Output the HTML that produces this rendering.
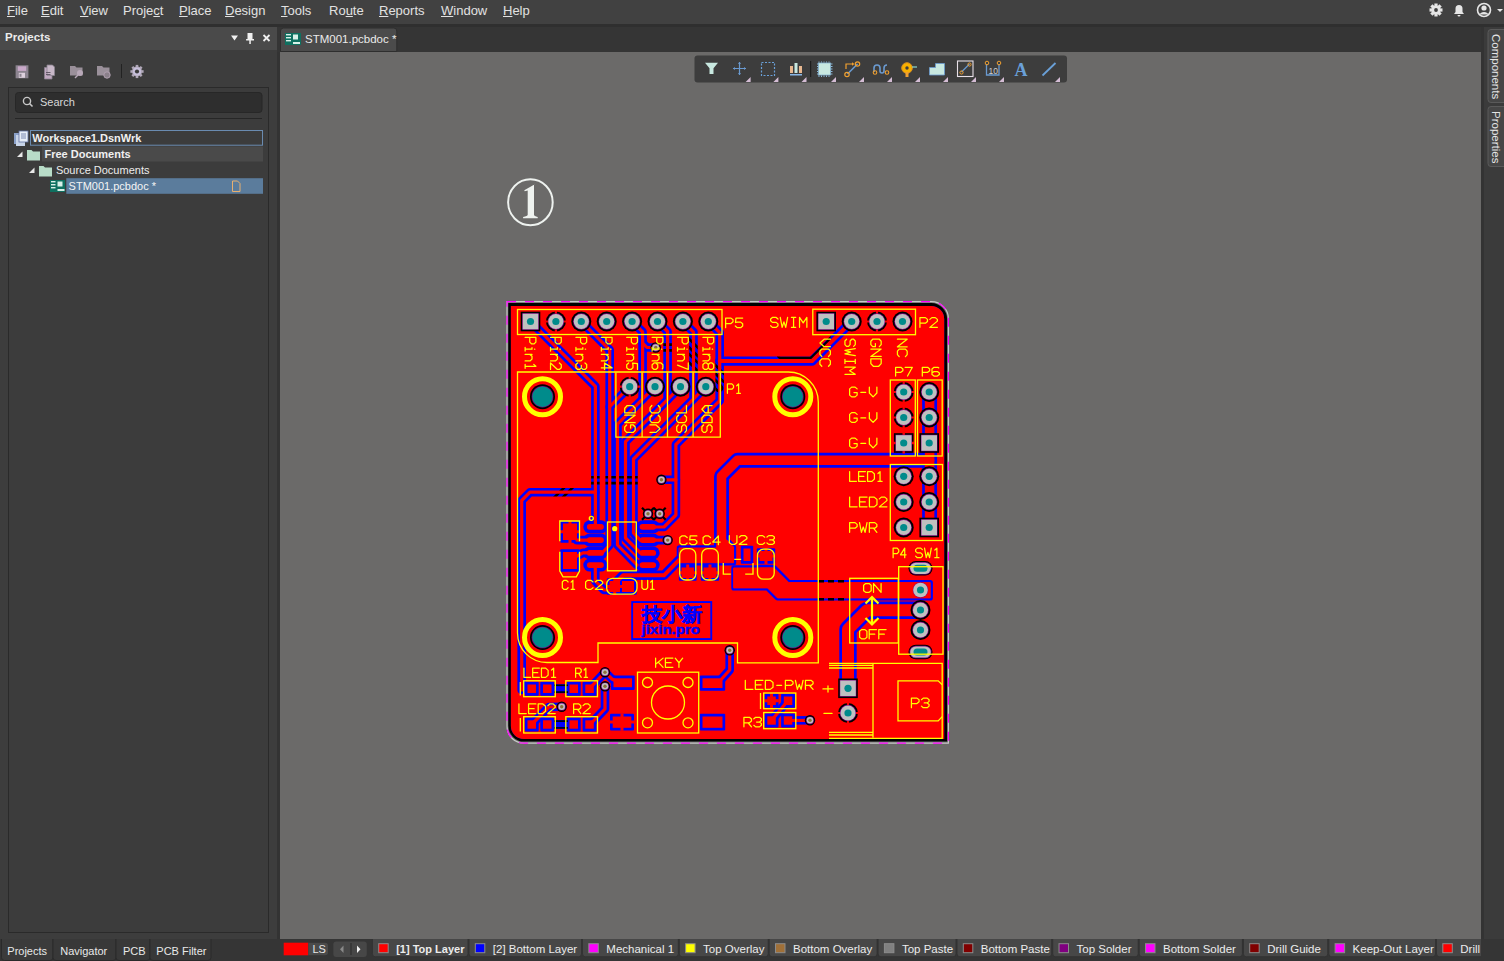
<!DOCTYPE html>
<html><head><meta charset="utf-8">
<style>
*{margin:0;padding:0;box-sizing:border-box}
html,body{width:1504px;height:961px;overflow:hidden;background:#333;font-family:"Liberation Sans",sans-serif;color:#e6e6e6}
.a{position:absolute}
#menubar{left:0;top:0;width:1504px;height:24px;background:#414141}
.mi{position:absolute;top:3px;font-size:13px;color:#e2e2e2;white-space:nowrap}
.mi u{text-decoration:underline;text-underline-offset:1px}
#strip{left:0;top:24px;width:1504px;height:3px;background:#2f2f2f}
#phead{left:0;top:27px;width:277px;height:23px;background:#4a4a4a}
#pbody{left:0;top:50px;width:277px;height:890px;background:#3d3d3d}
#tabbar{left:277px;top:27px;width:1204px;height:25px;background:#353535}
#canvas{left:280px;top:52px;width:1201px;height:887px;background:#6b6a69}
#rstrip{left:1481px;top:27px;width:23px;height:934px;background:#333}
#rpanel{left:1484px;top:27px;width:20px;height:912px;background:#3b3b3b}
#bbar{left:0;top:939px;width:1504px;height:22px;background:#353535}
.lt{position:absolute;top:0px;height:18px;background:#474747;border-radius:0 0 3px 3px;font-size:11.5px;color:#e6e6e6;white-space:nowrap;border:1px solid #3a3a3a;border-top:none}
.sw{position:absolute;top:3.5px;width:10px;height:10px;border:1px solid #8c8c8c}
.lt span{position:absolute;top:2px}
.btab{position:absolute;top:1px;height:21px;background:#3d3d3d;border:1px solid #2c2c2c;border-top:none;font-size:11.5px;color:#e6e6e6;white-space:nowrap}
.btab span{position:absolute;top:4px}
.tree{position:absolute;font-size:11px;color:#ececec;white-space:nowrap}
.tb{position:absolute}
</style></head><body>
<div id="menubar" class="a">
 <span class="mi" style="left:7px"><u>F</u>ile</span>
 <span class="mi" style="left:41px"><u>E</u>dit</span>
 <span class="mi" style="left:80px"><u>V</u>iew</span>
 <span class="mi" style="left:123px">Proje<u>c</u>t</span>
 <span class="mi" style="left:179px"><u>P</u>lace</span>
 <span class="mi" style="left:225px"><u>D</u>esign</span>
 <span class="mi" style="left:281px"><u>T</u>ools</span>
 <span class="mi" style="left:329px">Ro<u>u</u>te</span>
 <span class="mi" style="left:379px"><u>R</u>eports</span>
 <span class="mi" style="left:441px"><u>W</u>indow</span>
 <span class="mi" style="left:503px"><u>H</u>elp</span>
</div>
<div id="strip" class="a"></div>
<div id="phead" class="a"><span class="a" style="left:5px;top:4px;font-size:11.5px;font-weight:bold;color:#ececec">Projects</span></div>
<div id="pbody" class="a"></div>
<div id="tabbar" class="a"></div>
<div id="canvas" class="a"></div>
<div id="rstrip" class="a"></div>
<div id="rpanel" class="a"></div>
<div id="bbar" class="a"></div>
<svg class="a" style="left:0;top:0" width="1504" height="961" viewBox="0 0 1504 961">
<defs>
<clipPath id="cb"><path d="M510.9,305.9 H931.2 A13,13 0 0 1 944.2,318.9 V739 H523.9 A13,13 0 0 1 510.9,726 Z"/></clipPath>
<mask id="tm" maskUnits="userSpaceOnUse" x="0" y="0" width="1504" height="961">
<rect x="0" y="0" width="1504" height="961" fill="#fff"/>
<g fill="none" stroke="#000" stroke-linecap="round" stroke-linejoin="round">
<path d="M530.5,321.5 L595.4,386.4 L595.4,527.0" stroke-width="8.6"/>
<path d="M595.4,492.2 L530.0,492.2 L521.7,500.5 L521.7,690.0" stroke-width="8.6"/>
<path d="M581.3,321.5 L609.7,349.9 L609.7,545.0 L602.0,553.0" stroke-width="8.6"/>
<path d="M632.2,321.5 L642.6,331.9 L642.6,399.1" stroke-width="8.6"/>
<path d="M655.0,386.7 L617.5,424.2 L617.5,545.0 L637.0,565.0" stroke-width="8.6"/>
<path d="M657.6,321.5 L667.6,331.5 L667.6,399.6" stroke-width="8.6"/>
<path d="M680.5,386.7 L625.5,441.7 L625.5,538.0 L640.0,552.5" stroke-width="8.6"/>
<path d="M682.9,321.5 L693.5,332.1 L693.5,399.0" stroke-width="8.6"/>
<path d="M705.8,386.7 L633.5,459.0 L633.5,533.0 L640.0,540.0" stroke-width="8.6"/>
<path d="M629.7,386.7 L609.7,406.7" stroke-width="8.6"/>
<path d="M708.6,321.5 L719.7,332.6 L719.7,400.7 L675.9,444.5 L675.9,515.0 L664.0,527.0 L650.0,527.0" stroke-width="8.6"/>
<path d="M851.7,321.5 L812.0,361.1 L719.7,361.1" stroke-width="9.4"/>
<path d="M655.7,347.5 L647.0,347.5 L642.6,343.0" stroke-width="8.6"/>
<path d="M661.4,479.8 L675.9,479.8" stroke-width="8.6"/>
<path d="M650.0,540.1 L667.7,540.1" stroke-width="8.6"/>
<path d="M595.3,565.0 L595.3,581.0 L604.0,590.0 L612.0,590.0" stroke-width="8.6"/>
<path d="M577.0,540.1 L590.0,540.1" stroke-width="8.6"/>
<path d="M577.0,556.0 L583.0,552.9 L590.0,552.9" stroke-width="8.6"/>
<path d="M679.0,560.0 L664.0,575.3 L623.0,575.3 L617.0,581.3" stroke-width="9.4"/>
<path d="M929.6,392.0 L929.6,460.2 L737.5,460.2 L721.5,476.2 L721.5,548.0" stroke-width="14.9"/>
<path d="M929.6,460.2 L929.6,527.5" stroke-width="14.9"/>
<path d="M920.5,610.2 L867.0,610.2 L848.0,629.2 L848.0,688.0" stroke-width="17.4"/>
<path d="M589.5,688.7 L605.0,672.2" stroke-width="8.6"/>
<path d="M605.0,672.2 L612.0,679.0 L620.0,683.0" stroke-width="8.6"/>
<path d="M605.0,686.3 L605.0,709.0 L590.0,724.5" stroke-width="8.6"/>
<path d="M531.0,725.0 L549.0,707.0 L561.7,706.7" stroke-width="8.6"/>
<path d="M713.0,683.0 L718.0,683.0 L729.7,670.0 L729.7,650.3" stroke-width="8.6"/>
<path d="M771.5,720.5 L788.0,700.5" stroke-width="8.6"/>
<path d="M788.0,720.5 L810.0,720.3" stroke-width="8.6"/>
<path d="M679.4,548.0 L716.8,548.0 L716.8,540.0 L726.8,540.0 L733.5,547.0 L733.5,562.7 L679.4,562.7Z" fill="#000" stroke-width="5.4"/>
<path d="M734.0,568.0 L774.2,568.0 L788.8,582.6 L930.2,582.6 L930.2,597.9 L777.5,597.9 L767.5,587.9 L734.0,587.9Z" fill="#000" stroke-width="5.4"/>
</g>
<rect x="583.3" y="520.3" width="24.2" height="13.0" rx="6.5" fill="#000"/>
<rect x="636.0" y="520.3" width="23.7" height="13.0" rx="6.5" fill="#000"/>
<rect x="583.3" y="533.6" width="24.2" height="13.0" rx="6.5" fill="#000"/>
<rect x="636.0" y="533.6" width="23.7" height="13.0" rx="6.5" fill="#000"/>
<rect x="583.3" y="546.4" width="24.2" height="13.0" rx="6.5" fill="#000"/>
<rect x="636.0" y="546.4" width="23.7" height="13.0" rx="6.5" fill="#000"/>
<rect x="583.3" y="558.6" width="24.2" height="13.0" rx="6.5" fill="#000"/>
<rect x="636.0" y="558.6" width="23.7" height="13.0" rx="6.5" fill="#000"/>
<rect x="560.3" y="520.8" width="19.4" height="21.9" rx="1" fill="#000"/>
<rect x="560.3" y="549.3" width="19.4" height="22.4" rx="1" fill="#000"/>
<rect x="606.8" y="578.3" width="15.9" height="16.4" rx="1" fill="#000"/>
<rect x="619.3" y="578.3" width="17.4" height="16.4" rx="1" fill="#000"/>
<rect x="678.8" y="548.3" width="17.9" height="15.4" rx="1" fill="#000"/>
<rect x="678.8" y="564.8" width="17.9" height="15.9" rx="1" fill="#000"/>
<rect x="700.8" y="548.3" width="18.4" height="15.4" rx="1" fill="#000"/>
<rect x="700.8" y="564.8" width="18.4" height="15.9" rx="1" fill="#000"/>
<rect x="756.8" y="548.3" width="18.4" height="15.4" rx="1" fill="#000"/>
<rect x="756.8" y="564.8" width="18.4" height="15.9" rx="1" fill="#000"/>
<rect x="740.8" y="545.8" width="12.4" height="17.9" rx="1" fill="#000"/>
<rect x="524.8" y="681.8" width="13.9" height="13.9" rx="1" fill="#000"/>
<rect x="540.3" y="681.8" width="13.9" height="13.9" rx="1" fill="#000"/>
<rect x="566.8" y="681.8" width="13.9" height="13.9" rx="1" fill="#000"/>
<rect x="582.6" y="681.8" width="13.9" height="13.9" rx="1" fill="#000"/>
<rect x="524.8" y="717.6" width="13.9" height="13.8" rx="1" fill="#000"/>
<rect x="540.3" y="717.6" width="13.9" height="13.8" rx="1" fill="#000"/>
<rect x="566.8" y="717.6" width="13.9" height="13.8" rx="1" fill="#000"/>
<rect x="582.6" y="717.6" width="13.9" height="13.8" rx="1" fill="#000"/>
<rect x="610.8" y="675.6" width="23.9" height="14.3" rx="1" fill="#000"/>
<rect x="699.8" y="675.6" width="25.4" height="15.1" rx="1" fill="#000"/>
<rect x="610.0" y="713.8" width="24.0" height="16.7" rx="1" fill="#000"/>
<rect x="699.8" y="713.8" width="25.4" height="16.7" rx="1" fill="#000"/>
<rect x="764.6" y="693.8" width="13.9" height="13.9" rx="1" fill="#000"/>
<rect x="781.1" y="693.8" width="13.9" height="13.9" rx="1" fill="#000"/>
<rect x="764.6" y="713.6" width="13.9" height="13.8" rx="1" fill="#000"/>
<rect x="781.1" y="713.6" width="13.9" height="13.8" rx="1" fill="#000"/>
</mask>
</defs>
<path d="M507,301.6 H931.4 A17,17 0 0 1 948.4,318.6 V743.2 H524 A17,17 0 0 1 507,726.2 Z" fill="none" stroke="#c8c8c8" stroke-width="1.2"/>
<path d="M507,301.6 H931.4 A17,17 0 0 1 948.4,318.6 V743.2 H524 A17,17 0 0 1 507,726.2 Z" fill="none" stroke="#ff00ff" stroke-width="1.2" stroke-dasharray="9 9"/>
<path d="M508.3,303 H931.1 A16,16 0 0 1 947.1,319 V741.6 H524.3 A16,16 0 0 1 508.3,725.6 Z" fill="#000"/>
<g clip-path="url(#cb)">
<rect x="500" y="300" width="460" height="450" fill="#0000ff"/>
<g fill="none" stroke-linecap="round" stroke-linejoin="round">
<path d="M655.7,347.5 L678.0,347.5 L700.0,369.0 L719.0,388.0" stroke="#000" stroke-width="8.6"/>
<path d="M686.0,340.0 L700.0,354.0 L725.0,379.0" stroke="#000" stroke-width="8.6"/>
<path d="M591.0,480.2 L640.0,480.2" stroke="#000" stroke-width="8.6"/>
<path d="M533.0,523.0 L573.0,483.0" stroke="#000" stroke-width="8.6"/>
<path d="M826.2,325.0 L826.2,338.5 L809.7,355.0 L781.0,355.0" stroke="#000" stroke-width="8.6"/>
<path d="M655.7,347.5 L678.0,347.5 L700.0,369.0 L719.0,388.0" stroke="#0000ff" stroke-width="3.2"/>
<path d="M686.0,340.0 L700.0,354.0 L725.0,379.0" stroke="#0000ff" stroke-width="3.2"/>
<path d="M591.0,480.2 L640.0,480.2" stroke="#0000ff" stroke-width="3.2"/>
<path d="M533.0,523.0 L573.0,483.0" stroke="#0000ff" stroke-width="3.2"/>
<path d="M826.2,325.0 L826.2,338.5 L809.7,355.0 L781.0,355.0" stroke="#0000ff" stroke-width="3.2"/>
</g>
<rect x="500" y="300" width="460" height="450" fill="#ff0000" mask="url(#tm)"/>
<g fill="none" stroke="#ff0000" stroke-linecap="round" stroke-linejoin="round">
<path d="M530.5,321.5 L595.4,386.4 L595.4,527.0" stroke-width="3.2"/>
<path d="M595.4,492.2 L530.0,492.2 L521.7,500.5 L521.7,690.0" stroke-width="3.2"/>
<path d="M581.3,321.5 L609.7,349.9 L609.7,545.0 L602.0,553.0" stroke-width="3.2"/>
<path d="M632.2,321.5 L642.6,331.9 L642.6,399.1" stroke-width="3.2"/>
<path d="M655.0,386.7 L617.5,424.2 L617.5,545.0 L637.0,565.0" stroke-width="3.2"/>
<path d="M657.6,321.5 L667.6,331.5 L667.6,399.6" stroke-width="3.2"/>
<path d="M680.5,386.7 L625.5,441.7 L625.5,538.0 L640.0,552.5" stroke-width="3.2"/>
<path d="M682.9,321.5 L693.5,332.1 L693.5,399.0" stroke-width="3.2"/>
<path d="M705.8,386.7 L633.5,459.0 L633.5,533.0 L640.0,540.0" stroke-width="3.2"/>
<path d="M629.7,386.7 L609.7,406.7" stroke-width="3.2"/>
<path d="M708.6,321.5 L719.7,332.6 L719.7,400.7 L675.9,444.5 L675.9,515.0 L664.0,527.0 L650.0,527.0" stroke-width="3.2"/>
<path d="M851.7,321.5 L812.0,361.1 L719.7,361.1" stroke-width="4.0"/>
<path d="M655.7,347.5 L647.0,347.5 L642.6,343.0" stroke-width="3.2"/>
<path d="M661.4,479.8 L675.9,479.8" stroke-width="3.2"/>
<path d="M650.0,540.1 L667.7,540.1" stroke-width="3.2"/>
<path d="M595.3,565.0 L595.3,581.0 L604.0,590.0 L612.0,590.0" stroke-width="3.2"/>
<path d="M577.0,540.1 L590.0,540.1" stroke-width="3.2"/>
<path d="M577.0,556.0 L583.0,552.9 L590.0,552.9" stroke-width="3.2"/>
<path d="M679.0,560.0 L664.0,575.3 L623.0,575.3 L617.0,581.3" stroke-width="4.0"/>
<path d="M929.6,392.0 L929.6,460.2 L737.5,460.2 L721.5,476.2 L721.5,548.0" stroke-width="9.5"/>
<path d="M929.6,460.2 L929.6,527.5" stroke-width="9.5"/>
<path d="M920.5,610.2 L867.0,610.2 L848.0,629.2 L848.0,688.0" stroke-width="12.0"/>
<path d="M589.5,688.7 L605.0,672.2" stroke-width="3.2"/>
<path d="M605.0,672.2 L612.0,679.0 L620.0,683.0" stroke-width="3.2"/>
<path d="M605.0,686.3 L605.0,709.0 L590.0,724.5" stroke-width="3.2"/>
<path d="M531.0,725.0 L549.0,707.0 L561.7,706.7" stroke-width="3.2"/>
<path d="M713.0,683.0 L718.0,683.0 L729.7,670.0 L729.7,650.3" stroke-width="3.2"/>
<path d="M771.5,720.5 L788.0,700.5" stroke-width="3.2"/>
<path d="M788.0,720.5 L810.0,720.3" stroke-width="3.2"/>
<path d="M679.4,548.0 L716.8,548.0 L716.8,540.0 L726.8,540.0 L733.5,547.0 L733.5,562.7 L679.4,562.7Z" fill="#ff0000"/>
<path d="M734.0,568.0 L774.2,568.0 L788.8,582.6 L930.2,582.6 L930.2,597.9 L777.5,597.9 L767.5,587.9 L734.0,587.9Z" fill="#ff0000"/>
</g>
<rect x="586.9" y="523.9" width="17.0" height="5.8" rx="2.9" fill="#ff0000"/>
<rect x="639.6" y="523.9" width="16.5" height="5.8" rx="2.9" fill="#ff0000"/>
<rect x="586.9" y="537.2" width="17.0" height="5.8" rx="2.9" fill="#ff0000"/>
<rect x="639.6" y="537.2" width="16.5" height="5.8" rx="2.9" fill="#ff0000"/>
<rect x="586.9" y="550.0" width="17.0" height="5.8" rx="2.9" fill="#ff0000"/>
<rect x="639.6" y="550.0" width="16.5" height="5.8" rx="2.9" fill="#ff0000"/>
<rect x="586.9" y="562.2" width="17.0" height="5.8" rx="2.9" fill="#ff0000"/>
<rect x="639.6" y="562.2" width="16.5" height="5.8" rx="2.9" fill="#ff0000"/>
<rect x="563" y="523.5" width="14.0" height="16.5" rx="0" fill="#ff0000"/>
<path d="M568.5,520.5 h3 v22.5 h-3z M560.0,530.2 v3 h20.0 v-3z" fill="#ff0000"/>
<rect x="563" y="552" width="14.0" height="17.0" rx="0" fill="#ff0000"/>
<rect x="609.5" y="581" width="10.5" height="11.0" rx="0" fill="#ff0000"/>
<path d="M613.2,578.0 h3 v17.0 h-3z M606.5,585.0 v3 h16.5 v-3z" fill="#ff0000"/>
<rect x="622" y="581" width="12.0" height="11.0" rx="0" fill="#ff0000"/>
<rect x="681.5" y="551" width="12.5" height="10.0" rx="0" fill="#ff0000"/>
<rect x="681.5" y="567.5" width="12.5" height="10.5" rx="0" fill="#ff0000"/>
<path d="M686.2,564.5 h3 v16.5 h-3z M678.5,571.2 v3 h18.5 v-3z" fill="#ff0000"/>
<rect x="703.5" y="551" width="13.0" height="10.0" rx="0" fill="#ff0000"/>
<rect x="703.5" y="567.5" width="13.0" height="10.5" rx="0" fill="#ff0000"/>
<path d="M708.5,564.5 h3 v16.5 h-3z M700.5,571.2 v3 h19.0 v-3z" fill="#ff0000"/>
<rect x="759.5" y="551" width="13.0" height="10.0" rx="0" fill="#ff0000"/>
<path d="M764.5,548.0 h3 v16.0 h-3z M756.5,554.5 v3 h19.0 v-3z" fill="#ff0000"/>
<rect x="759.5" y="567.5" width="13.0" height="10.5" rx="0" fill="#ff0000"/>
<rect x="743.5" y="548.5" width="7.0" height="12.5" rx="0" fill="#ff0000"/>
<rect x="527.5" y="684.5" width="8.5" height="8.5" rx="0" fill="#ff0000"/>
<rect x="543" y="684.5" width="8.5" height="8.5" rx="0" fill="#ff0000"/>
<rect x="569.5" y="684.5" width="8.5" height="8.5" rx="0" fill="#ff0000"/>
<rect x="585.3" y="684.5" width="8.5" height="8.5" rx="0" fill="#ff0000"/>
<rect x="527.5" y="720.3" width="8.5" height="8.4" rx="0" fill="#ff0000"/>
<rect x="543" y="720.3" width="8.5" height="8.4" rx="0" fill="#ff0000"/>
<rect x="569.5" y="720.3" width="8.5" height="8.4" rx="0" fill="#ff0000"/>
<rect x="585.3" y="720.3" width="8.5" height="8.4" rx="0" fill="#ff0000"/>
<rect x="613.5" y="678.3" width="18.5" height="8.9" rx="0" fill="#ff0000"/>
<rect x="702.5" y="678.3" width="20.0" height="9.7" rx="0" fill="#ff0000"/>
<rect x="612.7" y="716.5" width="18.6" height="11.3" rx="0" fill="#ff0000"/>
<path d="M620.5,713.5 h3 v17.3 h-3z M609.7,720.6 v3 h24.6 v-3z" fill="#ff0000"/>
<rect x="702.5" y="716.5" width="20.0" height="11.3" rx="0" fill="#ff0000"/>
<rect x="767.3" y="696.5" width="8.5" height="8.5" rx="0" fill="#ff0000"/>
<path d="M770.0,693.5 h3 v14.5 h-3z M764.3,699.2 v3 h14.5 v-3z" fill="#ff0000"/>
<rect x="783.8" y="696.5" width="8.5" height="8.5" rx="0" fill="#ff0000"/>
<rect x="767.3" y="716.3" width="8.5" height="8.4" rx="0" fill="#ff0000"/>
<rect x="783.8" y="716.3" width="8.5" height="8.4" rx="0" fill="#ff0000"/>
</g>
<rect x="554" y="684.2" width="14" height="9" fill="#0000ff"/><rect x="554" y="684.5" width="14" height="1.6" fill="#000"/><rect x="554" y="691.3000000000001" width="14" height="1.6" fill="#000"/>
<rect x="554" y="720.0" width="14" height="9" fill="#0000ff"/><rect x="554" y="720.3" width="14" height="1.6" fill="#000"/><rect x="554" y="727.1" width="14" height="1.6" fill="#000"/>
<path d="M642,507.79999999999995 L654,519.8 M654,507.79999999999995 L642,519.8" stroke="#000" stroke-width="2.2"/>
<path d="M653.7,507.79999999999995 L665.7,519.8 M665.7,507.79999999999995 L653.7,519.8" stroke="#000" stroke-width="2.2"/>
<rect x="520.7" y="311.7" width="19.6" height="19.6" fill="#000"/>
<rect x="522.2" y="313.2" width="16.6" height="16.6" fill="#800080"/>
<rect x="522.7" y="313.7" width="15.6" height="15.6" fill="#c0c0c0"/>
<circle cx="530.5" cy="321.5" r="3.6" fill="#008b8b"/>
<circle cx="555.9" cy="321.5" r="10" fill="#000"/>
<path d="M554.8,310.9 h2.2 v21.2 h-2.2z M545.3,320.4 v2.2 h21.2 v-2.2z" fill="#ff0000"/>
<circle cx="555.9" cy="321.5" r="8.2" fill="#800080"/><circle cx="555.9" cy="321.5" r="7.6" fill="#c0c0c0"/>
<circle cx="555.9" cy="321.5" r="3.6" fill="#008b8b"/>
<circle cx="581.3" cy="321.5" r="10" fill="#000"/>
<circle cx="581.3" cy="321.5" r="8.2" fill="#800080"/><circle cx="581.3" cy="321.5" r="7.6" fill="#c0c0c0"/>
<circle cx="581.3" cy="321.5" r="3.6" fill="#008b8b"/>
<circle cx="606.7" cy="321.5" r="10" fill="#000"/>
<circle cx="606.7" cy="321.5" r="8.2" fill="#800080"/><circle cx="606.7" cy="321.5" r="7.6" fill="#c0c0c0"/>
<circle cx="606.7" cy="321.5" r="3.6" fill="#008b8b"/>
<circle cx="632.1" cy="321.5" r="10" fill="#000"/>
<circle cx="632.1" cy="321.5" r="8.2" fill="#800080"/><circle cx="632.1" cy="321.5" r="7.6" fill="#c0c0c0"/>
<circle cx="632.1" cy="321.5" r="3.6" fill="#008b8b"/>
<circle cx="657.5" cy="321.5" r="10" fill="#000"/>
<circle cx="657.5" cy="321.5" r="8.2" fill="#800080"/><circle cx="657.5" cy="321.5" r="7.6" fill="#c0c0c0"/>
<circle cx="657.5" cy="321.5" r="3.6" fill="#008b8b"/>
<circle cx="682.9" cy="321.5" r="10" fill="#000"/>
<circle cx="682.9" cy="321.5" r="8.2" fill="#800080"/><circle cx="682.9" cy="321.5" r="7.6" fill="#c0c0c0"/>
<circle cx="682.9" cy="321.5" r="3.6" fill="#008b8b"/>
<circle cx="708.3" cy="321.5" r="10" fill="#000"/>
<circle cx="708.3" cy="321.5" r="8.2" fill="#800080"/><circle cx="708.3" cy="321.5" r="7.6" fill="#c0c0c0"/>
<circle cx="708.3" cy="321.5" r="3.6" fill="#008b8b"/>
<rect x="816.4" y="311.7" width="19.6" height="19.6" fill="#000"/>
<rect x="817.9" y="313.2" width="16.6" height="16.6" fill="#800080"/>
<rect x="818.4" y="313.7" width="15.6" height="15.6" fill="#c0c0c0"/>
<circle cx="826.2" cy="321.5" r="3.6" fill="#008b8b"/>
<circle cx="851.7" cy="321.5" r="10" fill="#000"/>
<circle cx="851.7" cy="321.5" r="8.2" fill="#800080"/><circle cx="851.7" cy="321.5" r="7.6" fill="#c0c0c0"/>
<circle cx="851.7" cy="321.5" r="3.6" fill="#008b8b"/>
<circle cx="877.0" cy="321.5" r="10" fill="#000"/>
<path d="M875.9,310.9 h2.2 v21.2 h-2.2z M866.4,320.4 v2.2 h21.2 v-2.2z" fill="#ff0000"/>
<circle cx="877.0" cy="321.5" r="8.2" fill="#800080"/><circle cx="877.0" cy="321.5" r="7.6" fill="#c0c0c0"/>
<circle cx="877.0" cy="321.5" r="3.6" fill="#008b8b"/>
<circle cx="902.5" cy="321.5" r="10" fill="#000"/>
<circle cx="902.5" cy="321.5" r="8.2" fill="#800080"/><circle cx="902.5" cy="321.5" r="7.6" fill="#c0c0c0"/>
<circle cx="902.5" cy="321.5" r="3.6" fill="#008b8b"/>
<circle cx="629.7" cy="386.7" r="10" fill="#000"/>
<path d="M628.6,376.1 h2.2 v21.2 h-2.2z M619.1,385.6 v2.2 h21.2 v-2.2z" fill="#ff0000"/>
<circle cx="629.7" cy="386.7" r="8.2" fill="#800080"/><circle cx="629.7" cy="386.7" r="7.6" fill="#c0c0c0"/>
<circle cx="629.7" cy="386.7" r="3.6" fill="#008b8b"/>
<circle cx="655.0" cy="386.7" r="10" fill="#000"/>
<circle cx="655.0" cy="386.7" r="8.2" fill="#800080"/><circle cx="655.0" cy="386.7" r="7.6" fill="#c0c0c0"/>
<circle cx="655.0" cy="386.7" r="3.6" fill="#008b8b"/>
<circle cx="680.5" cy="386.7" r="10" fill="#000"/>
<circle cx="680.5" cy="386.7" r="8.2" fill="#800080"/><circle cx="680.5" cy="386.7" r="7.6" fill="#c0c0c0"/>
<circle cx="680.5" cy="386.7" r="3.6" fill="#008b8b"/>
<circle cx="705.8" cy="386.7" r="10" fill="#000"/>
<circle cx="705.8" cy="386.7" r="8.2" fill="#800080"/><circle cx="705.8" cy="386.7" r="7.6" fill="#c0c0c0"/>
<circle cx="705.8" cy="386.7" r="3.6" fill="#008b8b"/>
<circle cx="903.7" cy="392" r="10" fill="#000"/>
<path d="M902.6,381.4 h2.2 v21.2 h-2.2z M893.1,390.9 v2.2 h21.2 v-2.2z" fill="#ff0000"/>
<circle cx="903.7" cy="392" r="8.2" fill="#800080"/><circle cx="903.7" cy="392" r="7.6" fill="#c0c0c0"/>
<circle cx="903.7" cy="392" r="3.6" fill="#008b8b"/>
<circle cx="929.2" cy="392" r="10" fill="#000"/>
<circle cx="929.2" cy="392" r="8.2" fill="#800080"/><circle cx="929.2" cy="392" r="7.6" fill="#c0c0c0"/>
<circle cx="929.2" cy="392" r="3.6" fill="#008b8b"/>
<circle cx="903.7" cy="417.5" r="10" fill="#000"/>
<path d="M902.6,406.9 h2.2 v21.2 h-2.2z M893.1,416.4 v2.2 h21.2 v-2.2z" fill="#ff0000"/>
<circle cx="903.7" cy="417.5" r="8.2" fill="#800080"/><circle cx="903.7" cy="417.5" r="7.6" fill="#c0c0c0"/>
<circle cx="903.7" cy="417.5" r="3.6" fill="#008b8b"/>
<circle cx="929.2" cy="417.5" r="10" fill="#000"/>
<circle cx="929.2" cy="417.5" r="8.2" fill="#800080"/><circle cx="929.2" cy="417.5" r="7.6" fill="#c0c0c0"/>
<circle cx="929.2" cy="417.5" r="3.6" fill="#008b8b"/>
<rect x="893.9" y="433.2" width="19.6" height="19.6" fill="#000"/>
<path d="M902.5,432.5 h2.4 v21 h-2.4z M893.2,441.8 v2.4 h21 v-2.4z" fill="#ff0000"/>
<rect x="895.4" y="434.7" width="16.6" height="16.6" fill="#800080"/>
<rect x="895.9" y="435.2" width="15.6" height="15.6" fill="#c0c0c0"/>
<circle cx="903.7" cy="443" r="3.6" fill="#008b8b"/>
<rect x="919.4" y="433.2" width="19.6" height="19.6" fill="#000"/>
<rect x="920.9" y="434.7" width="16.6" height="16.6" fill="#800080"/>
<rect x="921.4" y="435.2" width="15.6" height="15.6" fill="#c0c0c0"/>
<circle cx="929.2" cy="443" r="3.6" fill="#008b8b"/>
<circle cx="903.7" cy="476.3" r="10" fill="#000"/>
<circle cx="903.7" cy="476.3" r="8.2" fill="#800080"/><circle cx="903.7" cy="476.3" r="7.6" fill="#c0c0c0"/>
<circle cx="903.7" cy="476.3" r="3.6" fill="#008b8b"/>
<circle cx="929.2" cy="476.3" r="10" fill="#000"/>
<circle cx="929.2" cy="476.3" r="8.2" fill="#800080"/><circle cx="929.2" cy="476.3" r="7.6" fill="#c0c0c0"/>
<circle cx="929.2" cy="476.3" r="3.6" fill="#008b8b"/>
<circle cx="903.7" cy="502" r="10" fill="#000"/>
<circle cx="903.7" cy="502" r="8.2" fill="#800080"/><circle cx="903.7" cy="502" r="7.6" fill="#c0c0c0"/>
<circle cx="903.7" cy="502" r="3.6" fill="#008b8b"/>
<circle cx="929.2" cy="502" r="10" fill="#000"/>
<circle cx="929.2" cy="502" r="8.2" fill="#800080"/><circle cx="929.2" cy="502" r="7.6" fill="#c0c0c0"/>
<circle cx="929.2" cy="502" r="3.6" fill="#008b8b"/>
<circle cx="903.7" cy="527.5" r="10" fill="#000"/>
<circle cx="903.7" cy="527.5" r="8.2" fill="#800080"/><circle cx="903.7" cy="527.5" r="7.6" fill="#c0c0c0"/>
<circle cx="903.7" cy="527.5" r="3.6" fill="#008b8b"/>
<rect x="919.4" y="517.7" width="19.6" height="19.6" fill="#000"/>
<rect x="920.9" y="519.2" width="16.6" height="16.6" fill="#800080"/>
<rect x="921.4" y="519.7" width="15.6" height="15.6" fill="#c0c0c0"/>
<circle cx="929.2" cy="527.5" r="3.6" fill="#008b8b"/>
<circle cx="920.5" cy="610" r="10" fill="#000"/>
<circle cx="920.5" cy="610" r="8.2" fill="#800080"/><circle cx="920.5" cy="610" r="7.6" fill="#c0c0c0"/>
<circle cx="920.5" cy="610" r="3.6" fill="#008b8b"/>
<circle cx="920.5" cy="630" r="10" fill="#000"/>
<circle cx="920.5" cy="630" r="8.2" fill="#800080"/><circle cx="920.5" cy="630" r="7.6" fill="#c0c0c0"/>
<circle cx="920.5" cy="630" r="3.6" fill="#008b8b"/>
<rect x="838.2" y="678.5" width="19.6" height="19.6" fill="#000"/>
<rect x="839.7" y="680.0" width="16.6" height="16.6" fill="#800080"/>
<rect x="840.2" y="680.5" width="15.6" height="15.6" fill="#c0c0c0"/>
<circle cx="848" cy="688.3" r="3.6" fill="#008b8b"/>
<circle cx="848" cy="713" r="10" fill="#000"/>
<path d="M846.9,702.4 h2.2 v21.2 h-2.2z M837.4,711.9 v2.2 h21.2 v-2.2z" fill="#ff0000"/>
<circle cx="848" cy="713" r="8.2" fill="#800080"/><circle cx="848" cy="713" r="7.6" fill="#c0c0c0"/>
<circle cx="848" cy="713" r="3.6" fill="#008b8b"/>
<circle cx="920.5" cy="590" r="7.8" fill="#800080"/><circle cx="920.5" cy="590" r="7.3" fill="#c0c0c0"/><circle cx="920.5" cy="590" r="3.6" fill="#008b8b"/>
<path d="M818,581.2 H848 M818,599.2 H848" stroke="#000" stroke-width="2.4" stroke-dasharray="6 4"/>
<rect x="908.5" y="561.0" width="24" height="14.6" rx="7.3" fill="#000"/>
<rect x="909.5" y="562.0" width="22" height="12.6" rx="6.3" fill="#800080"/>
<rect x="910.2" y="562.6999999999999" width="20.6" height="11.2" rx="5.6" fill="#c0c0c0"/>
<rect x="913.5" y="564.8" width="14" height="7" rx="3.5" fill="#008b8b"/>
<rect x="908.5" y="644.7" width="24" height="14.6" rx="7.3" fill="#000"/>
<rect x="909.5" y="645.7" width="22" height="12.6" rx="6.3" fill="#800080"/>
<rect x="910.2" y="646.4" width="20.6" height="11.2" rx="5.6" fill="#c0c0c0"/>
<rect x="913.5" y="648.5" width="14" height="7" rx="3.5" fill="#008b8b"/>
<circle cx="655.7" cy="347.5" r="5.2" fill="#000"/><circle cx="655.7" cy="347.5" r="3.9" fill="#800080"/><circle cx="655.7" cy="347.5" r="3.3" fill="#c0c0c0"/><circle cx="655.7" cy="347.5" r="1.7" fill="#8b6f3a"/>
<circle cx="661.4" cy="479.8" r="5.2" fill="#000"/><circle cx="661.4" cy="479.8" r="3.9" fill="#800080"/><circle cx="661.4" cy="479.8" r="3.3" fill="#c0c0c0"/><circle cx="661.4" cy="479.8" r="1.7" fill="#8b6f3a"/>
<circle cx="648" cy="513.8" r="5.2" fill="#000"/><circle cx="648" cy="513.8" r="3.9" fill="#800080"/><circle cx="648" cy="513.8" r="3.3" fill="#c0c0c0"/><circle cx="648" cy="513.8" r="1.7" fill="#8b6f3a"/>
<circle cx="659.7" cy="513.8" r="5.2" fill="#000"/><circle cx="659.7" cy="513.8" r="3.9" fill="#800080"/><circle cx="659.7" cy="513.8" r="3.3" fill="#c0c0c0"/><circle cx="659.7" cy="513.8" r="1.7" fill="#8b6f3a"/>
<circle cx="667.7" cy="540.1" r="5.2" fill="#000"/><circle cx="667.7" cy="540.1" r="3.9" fill="#800080"/><circle cx="667.7" cy="540.1" r="3.3" fill="#c0c0c0"/><circle cx="667.7" cy="540.1" r="1.7" fill="#8b6f3a"/>
<circle cx="605" cy="672.2" r="5.2" fill="#000"/><circle cx="605" cy="672.2" r="3.9" fill="#800080"/><circle cx="605" cy="672.2" r="3.3" fill="#c0c0c0"/><circle cx="605" cy="672.2" r="1.7" fill="#8b6f3a"/>
<circle cx="605" cy="686.3" r="5.2" fill="#000"/><circle cx="605" cy="686.3" r="3.9" fill="#800080"/><circle cx="605" cy="686.3" r="3.3" fill="#c0c0c0"/><circle cx="605" cy="686.3" r="1.7" fill="#8b6f3a"/>
<circle cx="561.7" cy="706.7" r="5.2" fill="#000"/><circle cx="561.7" cy="706.7" r="3.9" fill="#800080"/><circle cx="561.7" cy="706.7" r="3.3" fill="#c0c0c0"/><circle cx="561.7" cy="706.7" r="1.7" fill="#8b6f3a"/>
<circle cx="729.7" cy="650.3" r="5.2" fill="#000"/><circle cx="729.7" cy="650.3" r="3.9" fill="#800080"/><circle cx="729.7" cy="650.3" r="3.3" fill="#c0c0c0"/><circle cx="729.7" cy="650.3" r="1.7" fill="#8b6f3a"/>
<circle cx="810" cy="720.3" r="5.2" fill="#000"/><circle cx="810" cy="720.3" r="3.9" fill="#800080"/><circle cx="810" cy="720.3" r="3.3" fill="#c0c0c0"/><circle cx="810" cy="720.3" r="1.7" fill="#8b6f3a"/>
<circle cx="542.5" cy="396.7" r="18" fill="none" stroke="#ffff00" stroke-width="5"/>
<circle cx="542.5" cy="396.7" r="12.5" fill="#000"/><circle cx="542.5" cy="396.7" r="10.8" fill="#800080"/><circle cx="542.5" cy="396.7" r="10.2" fill="#008b8b"/>
<circle cx="792.8" cy="396.7" r="18" fill="none" stroke="#ffff00" stroke-width="5"/>
<circle cx="792.8" cy="396.7" r="12.5" fill="#000"/><circle cx="792.8" cy="396.7" r="10.8" fill="#800080"/><circle cx="792.8" cy="396.7" r="10.2" fill="#008b8b"/>
<circle cx="542.5" cy="637.5" r="18" fill="none" stroke="#ffff00" stroke-width="5"/>
<circle cx="542.5" cy="637.5" r="12.5" fill="#000"/><circle cx="542.5" cy="637.5" r="10.8" fill="#800080"/><circle cx="542.5" cy="637.5" r="10.2" fill="#008b8b"/>
<circle cx="792.8" cy="637.5" r="18" fill="none" stroke="#ffff00" stroke-width="5"/>
<circle cx="792.8" cy="637.5" r="12.5" fill="#000"/><circle cx="792.8" cy="637.5" r="10.8" fill="#800080"/><circle cx="792.8" cy="637.5" r="10.2" fill="#008b8b"/>
<g fill="none" stroke="#ffff00" stroke-width="1.3">
<rect x="517.5" y="309.5" width="204.5" height="25.0" rx="0"/>
<rect x="812.8" y="309.2" width="102.7" height="25.5" rx="0"/>
<path d="M642.1,372.5 L642.1,437.1"/>
<path d="M667.5,372.5 L667.5,437.1"/>
<path d="M693.1,372.5 L693.1,437.1"/>
<path d="M615.9,372.5 V437.1 H720.3 V372.5"/>
<path d="M517.5,372 H788 A30,30 0 0 1 818.3,402 V662.8 H737.5 V643 H598 V662.5 H547 A29.5,29.5 0 0 1 517.5,633 Z"/>
<rect x="890.3" y="380" width="25.0" height="76.0" rx="0"/>
<rect x="917.5" y="380" width="24.7" height="76.0" rx="0"/>
<rect x="890.3" y="464.5" width="52.2" height="76.0" rx="0"/>
<rect x="898.7" y="566.7" width="44.3" height="87.5" rx="0"/>
<rect x="849.7" y="578.3" width="48.6" height="64.7" rx="0"/>
<path d="M829,663.4 H942.2 V738.3 H829 M873,662.8 V737.5 M829,665.4 H873 M829,668 H873 M829,732.3 H873 M829,735 H873"/>
<path d="M942.2,684.8 L938.2,680.8 H898 V720.9 H938.2 L942.2,716.6"/>
<rect x="637.5" y="672.2" width="61.2" height="60.8" rx="0"/>
<circle cx="668" cy="702.5" r="16.5"/><circle cx="647.5" cy="682.5" r="5"/><circle cx="688" cy="682.5" r="5"/><circle cx="647.5" cy="722.8" r="5"/><circle cx="688" cy="722.8" r="5"/>
<rect x="523.7" y="680.8" width="31.6" height="15.9" rx="0"/>
<rect x="565.8" y="680.8" width="31.7" height="15.9" rx="0"/>
<rect x="523.7" y="716.7" width="31.6" height="16.3" rx="0"/>
<rect x="565.8" y="716.7" width="31.7" height="16.3" rx="0"/>
<rect x="763.7" y="693" width="32.1" height="15.7" rx="0"/>
<rect x="763.7" y="712.5" width="32.1" height="16.2" rx="0"/>
<path d="M520.3,682.0 L520.3,695.6"/>
<path d="M520.3,718.0 L520.3,731.6"/>
<path d="M760.5,693.0 L760.5,709.0"/>
<path d="M559.8,541.2 V521 H579.5 V541.2 M559.8,551.8 V571 L563,576.8 H576.3 L579.5,571 V551.8"/>
<rect x="606.7" y="578.3" width="30.3" height="15.9" rx="6"/>
<rect x="607.5" y="522" width="28.8" height="48.8" rx="0"/>
<rect x="679.7" y="548.7" width="16.1" height="31.3" rx="6"/>
<rect x="701.7" y="548.7" width="16.6" height="31.3" rx="6"/>
<rect x="757.5" y="549.2" width="16.7" height="30.0" rx="6"/>
<path d="M723.3,563 V574.2 H730.8 M753,563 V574.2 H745.2 M734.3,559.4 H741.2"/>
</g>
<circle cx="614.7" cy="528.7" r="2.6" fill="#ffff00"/><circle cx="591.3" cy="518.3" r="2" fill="none" stroke="#ffff00" stroke-width="1.3"/>
<path d="M872,597 V624.5 M865.5,603.5 L872,597 L878.5,603.5 M865.5,618 L872,624.5 L878.5,618" fill="none" stroke="#ffff00" stroke-width="2.2"/>
<g fill="none" stroke="#ffff00" stroke-linecap="round" stroke-linejoin="round">
<g transform="translate(725.00,317.50)" stroke-width="1.25"><path transform="translate(0.62,0.62) scale(1.1183,0.9550)" d="M0,10 V0 H4.8 L6.6,1.8 V3.9 L4.8,5.7 H0" vector-effect="non-scaling-stroke"/><path transform="translate(10.29,0.62) scale(1.1183,0.9550)" d="M6.6,0 H0.6 L0.2,4.6 L1.8,4.2 H4.8 L6.6,6 V8.2 L4.8,10 H1.8 L0,8.2" vector-effect="non-scaling-stroke"/></g>
<g transform="translate(770.00,316.80)" stroke-width="1.25"><path transform="translate(0.62,0.62) scale(1.1141,0.9950)" d="M6.6,1.6 L5,0 H1.6 L0,1.6 V3.4 L1.6,5 H5 L6.6,6.6 V8.4 L5,10 H1.6 L0,8.4" vector-effect="non-scaling-stroke"/><path transform="translate(10.26,0.62) scale(1.1141,0.9950)" d="M0,0 L1.7,10 L3.3,4.5 L4.9,10 L6.6,0" vector-effect="non-scaling-stroke"/><path transform="translate(19.89,0.62) scale(1.1141,0.9950)" d="M1.4,0 H5.2 M3.3,0 V10 M1.4,10 H5.2" vector-effect="non-scaling-stroke"/><path transform="translate(29.52,0.62) scale(1.1141,0.9950)" d="M0,10 V0 L3.3,5.5 L6.6,0 V10" vector-effect="non-scaling-stroke"/></g>
<g transform="translate(919.30,317.00)" stroke-width="1.25"><path transform="translate(0.62,0.62) scale(1.1446,0.9750)" d="M0,10 V0 H4.8 L6.6,1.8 V3.9 L4.8,5.7 H0" vector-effect="non-scaling-stroke"/><path transform="translate(10.52,0.62) scale(1.1446,0.9750)" d="M0,1.8 L1.8,0 H4.8 L6.6,1.8 V3.6 L0,10 H6.6" vector-effect="non-scaling-stroke"/></g>
<g transform="translate(726.80,383.30)" stroke-width="1.25"><path transform="translate(0.62,0.62) scale(0.9281,0.9350)" d="M0,10 V0 H4.8 L6.6,1.8 V3.9 L4.8,5.7 H0" vector-effect="non-scaling-stroke"/><path transform="translate(8.65,0.62) scale(0.9281,0.9350)" d="M1.4,2 L3.4,0 V10 M1.4,10 H5.4" vector-effect="non-scaling-stroke"/></g>
<g transform="translate(895.00,366.70)" stroke-width="1.25"><path transform="translate(0.62,0.62) scale(1.0986,0.8750)" d="M0,10 V0 H4.8 L6.6,1.8 V3.9 L4.8,5.7 H0" vector-effect="non-scaling-stroke"/><path transform="translate(10.12,0.62) scale(1.0986,0.8750)" d="M0,0 H6.6 L2.2,10" vector-effect="non-scaling-stroke"/></g>
<g transform="translate(921.70,366.70)" stroke-width="1.25"><path transform="translate(0.62,0.62) scale(1.1183,0.8750)" d="M0,10 V0 H4.8 L6.6,1.8 V3.9 L4.8,5.7 H0" vector-effect="non-scaling-stroke"/><path transform="translate(10.29,0.62) scale(1.1183,0.8750)" d="M6,0.6 L5.2,0 H1.8 L0,1.8 V8.2 L1.8,10 H4.8 L6.6,8.2 V6.6 L4.8,4.8 H1.8 L0,6.6" vector-effect="non-scaling-stroke"/></g>
<g transform="translate(849.00,386.50)" stroke-width="1.25"><path transform="translate(0.62,0.62) scale(1.1405,0.9750)" d="M6.6,1.8 L4.8,0 H1.8 L0,1.8 V8.2 L1.8,10 H4.8 L6.6,8.2 V5.6 H3.8" vector-effect="non-scaling-stroke"/><path transform="translate(10.49,0.62) scale(1.1405,0.9750)" d="M1.2,5.5 H5.4" vector-effect="non-scaling-stroke"/><path transform="translate(20.35,0.62) scale(1.1405,0.9750)" d="M0,0 V6 L3.3,10 L6.6,6 V0" vector-effect="non-scaling-stroke"/></g>
<g transform="translate(849.00,412.00)" stroke-width="1.25"><path transform="translate(0.62,0.62) scale(1.1405,0.9750)" d="M6.6,1.8 L4.8,0 H1.8 L0,1.8 V8.2 L1.8,10 H4.8 L6.6,8.2 V5.6 H3.8" vector-effect="non-scaling-stroke"/><path transform="translate(10.49,0.62) scale(1.1405,0.9750)" d="M1.2,5.5 H5.4" vector-effect="non-scaling-stroke"/><path transform="translate(20.35,0.62) scale(1.1405,0.9750)" d="M0,0 V6 L3.3,10 L6.6,6 V0" vector-effect="non-scaling-stroke"/></g>
<g transform="translate(849.00,437.50)" stroke-width="1.25"><path transform="translate(0.62,0.62) scale(1.1405,0.9750)" d="M6.6,1.8 L4.8,0 H1.8 L0,1.8 V8.2 L1.8,10 H4.8 L6.6,8.2 V5.6 H3.8" vector-effect="non-scaling-stroke"/><path transform="translate(10.49,0.62) scale(1.1405,0.9750)" d="M1.2,5.5 H5.4" vector-effect="non-scaling-stroke"/><path transform="translate(20.35,0.62) scale(1.1405,0.9750)" d="M0,0 V6 L3.3,10 L6.6,6 V0" vector-effect="non-scaling-stroke"/></g>
<g transform="translate(849.00,471.00)" stroke-width="1.25"><path transform="translate(0.62,0.62) scale(1.0372,0.9750)" d="M0,0 V10 H6.6" vector-effect="non-scaling-stroke"/><path transform="translate(9.59,0.62) scale(1.0372,0.9750)" d="M6.6,0 H0 V10 H6.6 M0,5 H5" vector-effect="non-scaling-stroke"/><path transform="translate(18.56,0.62) scale(1.0372,0.9750)" d="M0,0 V10 H4.2 L6.6,7.6 V2.4 L4.2,0 Z" vector-effect="non-scaling-stroke"/><path transform="translate(27.53,0.62) scale(1.0372,0.9750)" d="M1.4,2 L3.4,0 V10 M1.4,10 H5.4" vector-effect="non-scaling-stroke"/></g>
<g transform="translate(849.00,496.50)" stroke-width="1.25"><path transform="translate(0.62,0.62) scale(1.1448,0.9750)" d="M0,0 V10 H6.6" vector-effect="non-scaling-stroke"/><path transform="translate(10.52,0.62) scale(1.1448,0.9750)" d="M6.6,0 H0 V10 H6.6 M0,5 H5" vector-effect="non-scaling-stroke"/><path transform="translate(20.42,0.62) scale(1.1448,0.9750)" d="M0,0 V10 H4.2 L6.6,7.6 V2.4 L4.2,0 Z" vector-effect="non-scaling-stroke"/><path transform="translate(30.32,0.62) scale(1.1448,0.9750)" d="M0,1.8 L1.8,0 H4.8 L6.6,1.8 V3.6 L0,10 H6.6" vector-effect="non-scaling-stroke"/></g>
<g transform="translate(849.00,522.00)" stroke-width="1.25"><path transform="translate(0.62,0.62) scale(1.1405,0.9750)" d="M0,10 V0 H4.8 L6.6,1.8 V3.9 L4.8,5.7 H0" vector-effect="non-scaling-stroke"/><path transform="translate(10.49,0.62) scale(1.1405,0.9750)" d="M0,0 L1.7,10 L3.3,4.5 L4.9,10 L6.6,0" vector-effect="non-scaling-stroke"/><path transform="translate(20.35,0.62) scale(1.1405,0.9750)" d="M0,10 V0 H4.8 L6.6,1.8 V3.9 L4.8,5.7 H0 M3.6,5.7 L6.6,10" vector-effect="non-scaling-stroke"/></g>
<g transform="translate(892.50,547.50)" stroke-width="1.25"><path transform="translate(0.62,0.62) scale(0.8494,0.9550)" d="M0,10 V0 H4.8 L6.6,1.8 V3.9 L4.8,5.7 H0" vector-effect="non-scaling-stroke"/><path transform="translate(7.97,0.62) scale(0.8494,0.9550)" d="M5,10 V0 L0,7 H6.6" vector-effect="non-scaling-stroke"/></g>
<g transform="translate(915.00,547.50)" stroke-width="1.25"><path transform="translate(0.62,0.62) scale(1.0275,0.9550)" d="M6.6,1.6 L5,0 H1.6 L0,1.6 V3.4 L1.6,5 H5 L6.6,6.6 V8.4 L5,10 H1.6 L0,8.4" vector-effect="non-scaling-stroke"/><path transform="translate(9.51,0.62) scale(1.0275,0.9550)" d="M0,0 L1.7,10 L3.3,4.5 L4.9,10 L6.6,0" vector-effect="non-scaling-stroke"/><path transform="translate(18.39,0.62) scale(1.0275,0.9550)" d="M1.4,2 L3.4,0 V10 M1.4,10 H5.4" vector-effect="non-scaling-stroke"/></g>
<g transform="translate(863.00,583.00)" stroke-width="1.25"><path transform="translate(0.62,0.62) scale(1.1446,0.8750)" d="M1.8,0 H4.8 L6.6,1.8 V8.2 L4.8,10 H1.8 L0,8.2 V1.8 Z" vector-effect="non-scaling-stroke"/><path transform="translate(10.52,0.62) scale(1.1446,0.8750)" d="M0,10 V0 L6.6,10 V0" vector-effect="non-scaling-stroke"/></g>
<g transform="translate(859.00,629.00)" stroke-width="1.25"><path transform="translate(0.62,0.62) scale(1.1071,0.9250)" d="M1.8,0 H4.8 L6.6,1.8 V8.2 L4.8,10 H1.8 L0,8.2 V1.8 Z" vector-effect="non-scaling-stroke"/><path transform="translate(10.20,0.62) scale(1.1071,0.9250)" d="M6.6,0 H0 V10 M0,5 H5" vector-effect="non-scaling-stroke"/><path transform="translate(19.77,0.62) scale(1.1071,0.9250)" d="M6.6,0 H0 V10 M0,5 H5" vector-effect="non-scaling-stroke"/></g>
<g transform="translate(910.80,697.50)" stroke-width="1.25"><path transform="translate(0.62,0.62) scale(1.1577,0.9550)" d="M0,10 V0 H4.8 L6.6,1.8 V3.9 L4.8,5.7 H0" vector-effect="non-scaling-stroke"/><path transform="translate(10.63,0.62) scale(1.1577,0.9550)" d="M0,1.6 L1.6,0 H5 L6.6,1.6 V3.4 L5,5 H2.4 M5,5 L6.6,6.6 V8.4 L5,10 H1.6 L0,8.4" vector-effect="non-scaling-stroke"/></g>
<g transform="translate(822.00,683.00)" stroke-width="1.25"><path transform="translate(0.62,0.62) scale(1.6288,0.9750)" d="M3.3,2.4 V8.6 M0.2,5.5 H6.4" vector-effect="non-scaling-stroke"/></g>
<g transform="translate(821.00,708.00)" stroke-width="1.25"><path transform="translate(0.62,0.62) scale(1.9318,0.8750)" d="M1.2,5.5 H5.4" vector-effect="non-scaling-stroke"/></g>
<g transform="translate(744.70,679.70)" stroke-width="1.25"><path transform="translate(0.62,0.62) scale(1.1586,0.9050)" d="M0,0 V10 H6.6" vector-effect="non-scaling-stroke"/><path transform="translate(10.64,0.62) scale(1.1586,0.9050)" d="M6.6,0 H0 V10 H6.6 M0,5 H5" vector-effect="non-scaling-stroke"/><path transform="translate(20.66,0.62) scale(1.1586,0.9050)" d="M0,0 V10 H4.2 L6.6,7.6 V2.4 L4.2,0 Z" vector-effect="non-scaling-stroke"/><path transform="translate(30.68,0.62) scale(1.1586,0.9050)" d="M1.2,5.5 H5.4" vector-effect="non-scaling-stroke"/><path transform="translate(40.69,0.62) scale(1.1586,0.9050)" d="M0,10 V0 H4.8 L6.6,1.8 V3.9 L4.8,5.7 H0" vector-effect="non-scaling-stroke"/><path transform="translate(50.71,0.62) scale(1.1586,0.9050)" d="M0,0 L1.7,10 L3.3,4.5 L4.9,10 L6.6,0" vector-effect="non-scaling-stroke"/><path transform="translate(60.73,0.62) scale(1.1586,0.9050)" d="M0,10 V0 H4.8 L6.6,1.8 V3.9 L4.8,5.7 H0 M3.6,5.7 L6.6,10" vector-effect="non-scaling-stroke"/></g>
<g transform="translate(743.30,716.70)" stroke-width="1.25"><path transform="translate(0.62,0.62) scale(1.1446,0.9550)" d="M0,10 V0 H4.8 L6.6,1.8 V3.9 L4.8,5.7 H0 M3.6,5.7 L6.6,10" vector-effect="non-scaling-stroke"/><path transform="translate(10.52,0.62) scale(1.1446,0.9550)" d="M0,1.6 L1.6,0 H5 L6.6,1.6 V3.4 L5,5 H2.4 M5,5 L6.6,6.6 V8.4 L5,10 H1.6 L0,8.4" vector-effect="non-scaling-stroke"/></g>
<g transform="translate(655.00,657.50)" stroke-width="1.25"><path transform="translate(0.62,0.62) scale(1.1322,0.9250)" d="M0,0 V10 M6.6,0 L0,6.6 M2.3,4.4 L6.6,10" vector-effect="non-scaling-stroke"/><path transform="translate(10.41,0.62) scale(1.1322,0.9250)" d="M6.6,0 H0 V10 H6.6 M0,5 H5" vector-effect="non-scaling-stroke"/><path transform="translate(20.20,0.62) scale(1.1322,0.9250)" d="M0,0 L3.3,5 L6.6,0 M3.3,5 V10" vector-effect="non-scaling-stroke"/></g>
<g transform="translate(523.30,667.50)" stroke-width="1.25"><path transform="translate(0.62,0.62) scale(1.0127,0.9250)" d="M0,0 V10 H6.6" vector-effect="non-scaling-stroke"/><path transform="translate(9.38,0.62) scale(1.0127,0.9250)" d="M6.6,0 H0 V10 H6.6 M0,5 H5" vector-effect="non-scaling-stroke"/><path transform="translate(18.14,0.62) scale(1.0127,0.9250)" d="M0,0 V10 H4.2 L6.6,7.6 V2.4 L4.2,0 Z" vector-effect="non-scaling-stroke"/><path transform="translate(26.89,0.62) scale(1.0127,0.9250)" d="M1.4,2 L3.4,0 V10 M1.4,10 H5.4" vector-effect="non-scaling-stroke"/></g>
<g transform="translate(575.00,667.50)" stroke-width="1.25"><path transform="translate(0.62,0.62) scale(0.8494,0.9250)" d="M0,10 V0 H4.8 L6.6,1.8 V3.9 L4.8,5.7 H0 M3.6,5.7 L6.6,10" vector-effect="non-scaling-stroke"/><path transform="translate(7.97,0.62) scale(0.8494,0.9250)" d="M1.4,2 L3.4,0 V10 M1.4,10 H5.4" vector-effect="non-scaling-stroke"/></g>
<g transform="translate(518.30,703.30)" stroke-width="1.25"><path transform="translate(0.62,0.62) scale(1.1141,0.9650)" d="M0,0 V10 H6.6" vector-effect="non-scaling-stroke"/><path transform="translate(10.26,0.62) scale(1.1141,0.9650)" d="M6.6,0 H0 V10 H6.6 M0,5 H5" vector-effect="non-scaling-stroke"/><path transform="translate(19.89,0.62) scale(1.1141,0.9650)" d="M0,0 V10 H4.2 L6.6,7.6 V2.4 L4.2,0 Z" vector-effect="non-scaling-stroke"/><path transform="translate(29.52,0.62) scale(1.1141,0.9650)" d="M0,1.8 L1.8,0 H4.8 L6.6,1.8 V3.6 L0,10 H6.6" vector-effect="non-scaling-stroke"/></g>
<g transform="translate(573.00,703.30)" stroke-width="1.25"><path transform="translate(0.62,0.62) scale(1.0855,0.9650)" d="M0,10 V0 H4.8 L6.6,1.8 V3.9 L4.8,5.7 H0 M3.6,5.7 L6.6,10" vector-effect="non-scaling-stroke"/><path transform="translate(10.01,0.62) scale(1.0855,0.9650)" d="M0,1.8 L1.8,0 H4.8 L6.6,1.8 V3.6 L0,10 H6.6" vector-effect="non-scaling-stroke"/></g>
<g transform="translate(561.70,579.70)" stroke-width="1.25"><path transform="translate(0.62,0.62) scale(0.8756,0.9050)" d="M6.6,1.8 L4.8,0 H1.8 L0,1.8 V8.2 L1.8,10 H4.8 L6.6,8.2" vector-effect="non-scaling-stroke"/><path transform="translate(8.20,0.62) scale(0.8756,0.9050)" d="M1.4,2 L3.4,0 V10 M1.4,10 H5.4" vector-effect="non-scaling-stroke"/></g>
<g transform="translate(585.00,579.70)" stroke-width="1.25"><path transform="translate(0.62,0.62) scale(1.1183,0.9050)" d="M6.6,1.8 L4.8,0 H1.8 L0,1.8 V8.2 L1.8,10 H4.8 L6.6,8.2" vector-effect="non-scaling-stroke"/><path transform="translate(10.29,0.62) scale(1.1183,0.9050)" d="M0,1.8 L1.8,0 H4.8 L6.6,1.8 V3.6 L0,10 H6.6" vector-effect="non-scaling-stroke"/></g>
<g transform="translate(641.30,579.70)" stroke-width="1.25"><path transform="translate(0.62,0.62) scale(0.8691,0.9050)" d="M0,0 V8.2 L1.8,10 H4.8 L6.6,8.2 V0" vector-effect="non-scaling-stroke"/><path transform="translate(8.14,0.62) scale(0.8691,0.9050)" d="M1.4,2 L3.4,0 V10 M1.4,10 H5.4" vector-effect="non-scaling-stroke"/></g>
<g transform="translate(679.20,535.30)" stroke-width="1.25"><path transform="translate(0.62,0.62) scale(1.1183,0.8750)" d="M6.6,1.8 L4.8,0 H1.8 L0,1.8 V8.2 L1.8,10 H4.8 L6.6,8.2" vector-effect="non-scaling-stroke"/><path transform="translate(10.29,0.62) scale(1.1183,0.8750)" d="M6.6,0 H0.6 L0.2,4.6 L1.8,4.2 H4.8 L6.6,6 V8.2 L4.8,10 H1.8 L0,8.2" vector-effect="non-scaling-stroke"/></g>
<g transform="translate(702.50,535.30)" stroke-width="1.25"><path transform="translate(0.62,0.62) scale(1.1183,0.8750)" d="M6.6,1.8 L4.8,0 H1.8 L0,1.8 V8.2 L1.8,10 H4.8 L6.6,8.2" vector-effect="non-scaling-stroke"/><path transform="translate(10.29,0.62) scale(1.1183,0.8750)" d="M5,10 V0 L0,7 H6.6" vector-effect="non-scaling-stroke"/></g>
<g transform="translate(728.70,535.00)" stroke-width="1.25"><path transform="translate(0.62,0.62) scale(1.1511,0.8750)" d="M0,0 V8.2 L1.8,10 H4.8 L6.6,8.2 V0" vector-effect="non-scaling-stroke"/><path transform="translate(10.58,0.62) scale(1.1511,0.8750)" d="M0,1.8 L1.8,0 H4.8 L6.6,1.8 V3.6 L0,10 H6.6" vector-effect="non-scaling-stroke"/></g>
<g transform="translate(756.70,535.00)" stroke-width="1.25"><path transform="translate(0.62,0.62) scale(1.1183,0.8750)" d="M6.6,1.8 L4.8,0 H1.8 L0,1.8 V8.2 L1.8,10 H4.8 L6.6,8.2" vector-effect="non-scaling-stroke"/><path transform="translate(10.29,0.62) scale(1.1183,0.8750)" d="M0,1.6 L1.6,0 H5 L6.6,1.6 V3.4 L5,5 H2.4 M5,5 L6.6,6.6 V8.4 L5,10 H1.6 L0,8.4" vector-effect="non-scaling-stroke"/></g>
<g transform="matrix(0,1,-1,0,536.50,336.80)" stroke-width="1.25"><path transform="translate(0.62,0.62) scale(0.9850,1.0750)" d="M0,10 V0 H4.8 L6.6,1.8 V3.9 L4.8,5.7 H0" vector-effect="non-scaling-stroke"/><path transform="translate(9.14,0.62) scale(0.9850,1.0750)" d="M1.6,3.6 H3.3 V10 M1.4,10 H5.2 M3.3,1 V1.3" vector-effect="non-scaling-stroke"/><path transform="translate(17.66,0.62) scale(0.9850,1.0750)" d="M0,3.6 V10 M0,5.6 L1.9,3.6 H4.7 L6.6,5.5 V10" vector-effect="non-scaling-stroke"/><path transform="translate(26.17,0.62) scale(0.9850,1.0750)" d="M1.4,2 L3.4,0 V10 M1.4,10 H5.4" vector-effect="non-scaling-stroke"/></g>
<g transform="matrix(0,1,-1,0,561.90,336.80)" stroke-width="1.25"><path transform="translate(0.62,0.62) scale(0.9850,1.0750)" d="M0,10 V0 H4.8 L6.6,1.8 V3.9 L4.8,5.7 H0" vector-effect="non-scaling-stroke"/><path transform="translate(9.14,0.62) scale(0.9850,1.0750)" d="M1.6,3.6 H3.3 V10 M1.4,10 H5.2 M3.3,1 V1.3" vector-effect="non-scaling-stroke"/><path transform="translate(17.66,0.62) scale(0.9850,1.0750)" d="M0,3.6 V10 M0,5.6 L1.9,3.6 H4.7 L6.6,5.5 V10" vector-effect="non-scaling-stroke"/><path transform="translate(26.17,0.62) scale(0.9850,1.0750)" d="M0,1.8 L1.8,0 H4.8 L6.6,1.8 V3.6 L0,10 H6.6" vector-effect="non-scaling-stroke"/></g>
<g transform="matrix(0,1,-1,0,587.30,336.80)" stroke-width="1.25"><path transform="translate(0.62,0.62) scale(0.9850,1.0750)" d="M0,10 V0 H4.8 L6.6,1.8 V3.9 L4.8,5.7 H0" vector-effect="non-scaling-stroke"/><path transform="translate(9.14,0.62) scale(0.9850,1.0750)" d="M1.6,3.6 H3.3 V10 M1.4,10 H5.2 M3.3,1 V1.3" vector-effect="non-scaling-stroke"/><path transform="translate(17.66,0.62) scale(0.9850,1.0750)" d="M0,3.6 V10 M0,5.6 L1.9,3.6 H4.7 L6.6,5.5 V10" vector-effect="non-scaling-stroke"/><path transform="translate(26.17,0.62) scale(0.9850,1.0750)" d="M0,1.6 L1.6,0 H5 L6.6,1.6 V3.4 L5,5 H2.4 M5,5 L6.6,6.6 V8.4 L5,10 H1.6 L0,8.4" vector-effect="non-scaling-stroke"/></g>
<g transform="matrix(0,1,-1,0,612.70,336.80)" stroke-width="1.25"><path transform="translate(0.62,0.62) scale(0.9850,1.0750)" d="M0,10 V0 H4.8 L6.6,1.8 V3.9 L4.8,5.7 H0" vector-effect="non-scaling-stroke"/><path transform="translate(9.14,0.62) scale(0.9850,1.0750)" d="M1.6,3.6 H3.3 V10 M1.4,10 H5.2 M3.3,1 V1.3" vector-effect="non-scaling-stroke"/><path transform="translate(17.66,0.62) scale(0.9850,1.0750)" d="M0,3.6 V10 M0,5.6 L1.9,3.6 H4.7 L6.6,5.5 V10" vector-effect="non-scaling-stroke"/><path transform="translate(26.17,0.62) scale(0.9850,1.0750)" d="M5,10 V0 L0,7 H6.6" vector-effect="non-scaling-stroke"/></g>
<g transform="matrix(0,1,-1,0,638.10,336.80)" stroke-width="1.25"><path transform="translate(0.62,0.62) scale(0.9850,1.0750)" d="M0,10 V0 H4.8 L6.6,1.8 V3.9 L4.8,5.7 H0" vector-effect="non-scaling-stroke"/><path transform="translate(9.14,0.62) scale(0.9850,1.0750)" d="M1.6,3.6 H3.3 V10 M1.4,10 H5.2 M3.3,1 V1.3" vector-effect="non-scaling-stroke"/><path transform="translate(17.66,0.62) scale(0.9850,1.0750)" d="M0,3.6 V10 M0,5.6 L1.9,3.6 H4.7 L6.6,5.5 V10" vector-effect="non-scaling-stroke"/><path transform="translate(26.17,0.62) scale(0.9850,1.0750)" d="M6.6,0 H0.6 L0.2,4.6 L1.8,4.2 H4.8 L6.6,6 V8.2 L4.8,10 H1.8 L0,8.2" vector-effect="non-scaling-stroke"/></g>
<g transform="matrix(0,1,-1,0,663.50,336.80)" stroke-width="1.25"><path transform="translate(0.62,0.62) scale(0.9850,1.0750)" d="M0,10 V0 H4.8 L6.6,1.8 V3.9 L4.8,5.7 H0" vector-effect="non-scaling-stroke"/><path transform="translate(9.14,0.62) scale(0.9850,1.0750)" d="M1.6,3.6 H3.3 V10 M1.4,10 H5.2 M3.3,1 V1.3" vector-effect="non-scaling-stroke"/><path transform="translate(17.66,0.62) scale(0.9850,1.0750)" d="M0,3.6 V10 M0,5.6 L1.9,3.6 H4.7 L6.6,5.5 V10" vector-effect="non-scaling-stroke"/><path transform="translate(26.17,0.62) scale(0.9850,1.0750)" d="M6,0.6 L5.2,0 H1.8 L0,1.8 V8.2 L1.8,10 H4.8 L6.6,8.2 V6.6 L4.8,4.8 H1.8 L0,6.6" vector-effect="non-scaling-stroke"/></g>
<g transform="matrix(0,1,-1,0,688.90,336.80)" stroke-width="1.25"><path transform="translate(0.62,0.62) scale(0.9850,1.0750)" d="M0,10 V0 H4.8 L6.6,1.8 V3.9 L4.8,5.7 H0" vector-effect="non-scaling-stroke"/><path transform="translate(9.14,0.62) scale(0.9850,1.0750)" d="M1.6,3.6 H3.3 V10 M1.4,10 H5.2 M3.3,1 V1.3" vector-effect="non-scaling-stroke"/><path transform="translate(17.66,0.62) scale(0.9850,1.0750)" d="M0,3.6 V10 M0,5.6 L1.9,3.6 H4.7 L6.6,5.5 V10" vector-effect="non-scaling-stroke"/><path transform="translate(26.17,0.62) scale(0.9850,1.0750)" d="M0,0 H6.6 L2.2,10" vector-effect="non-scaling-stroke"/></g>
<g transform="matrix(0,1,-1,0,714.30,336.80)" stroke-width="1.25"><path transform="translate(0.62,0.62) scale(0.9850,1.0750)" d="M0,10 V0 H4.8 L6.6,1.8 V3.9 L4.8,5.7 H0" vector-effect="non-scaling-stroke"/><path transform="translate(9.14,0.62) scale(0.9850,1.0750)" d="M1.6,3.6 H3.3 V10 M1.4,10 H5.2 M3.3,1 V1.3" vector-effect="non-scaling-stroke"/><path transform="translate(17.66,0.62) scale(0.9850,1.0750)" d="M0,3.6 V10 M0,5.6 L1.9,3.6 H4.7 L6.6,5.5 V10" vector-effect="non-scaling-stroke"/><path transform="translate(26.17,0.62) scale(0.9850,1.0750)" d="M1.6,5 L0,3.4 V1.6 L1.6,0 H5 L6.6,1.6 V3.4 L5,5 H1.6 L0,6.6 V8.4 L1.6,10 H5 L6.6,8.4 V6.6 L5,5" vector-effect="non-scaling-stroke"/></g>
<g transform="matrix(0,1,-1,0,831.00,338.60)" stroke-width="1.25"><path transform="translate(0.62,0.62) scale(1.1322,1.0450)" d="M0,0 V6 L3.3,10 L6.6,6 V0" vector-effect="non-scaling-stroke"/><path transform="translate(10.41,0.62) scale(1.1322,1.0450)" d="M6.6,1.8 L4.8,0 H1.8 L0,1.8 V8.2 L1.8,10 H4.8 L6.6,8.2" vector-effect="non-scaling-stroke"/><path transform="translate(20.20,0.62) scale(1.1322,1.0450)" d="M6.6,1.8 L4.8,0 H1.8 L0,1.8 V8.2 L1.8,10 H4.8 L6.6,8.2" vector-effect="non-scaling-stroke"/></g>
<g transform="matrix(0,1,-1,0,855.90,338.60)" stroke-width="1.25"><path transform="translate(0.62,0.62) scale(1.0772,1.0350)" d="M6.6,1.6 L5,0 H1.6 L0,1.6 V3.4 L1.6,5 H5 L6.6,6.6 V8.4 L5,10 H1.6 L0,8.4" vector-effect="non-scaling-stroke"/><path transform="translate(9.94,0.62) scale(1.0772,1.0350)" d="M0,0 L1.7,10 L3.3,4.5 L4.9,10 L6.6,0" vector-effect="non-scaling-stroke"/><path transform="translate(19.25,0.62) scale(1.0772,1.0350)" d="M1.4,0 H5.2 M3.3,0 V10 M1.4,10 H5.2" vector-effect="non-scaling-stroke"/><path transform="translate(28.57,0.62) scale(1.0772,1.0350)" d="M0,10 V0 L3.3,5.5 L6.6,0 V10" vector-effect="non-scaling-stroke"/></g>
<g transform="matrix(0,1,-1,0,881.80,338.60)" stroke-width="1.25"><path transform="translate(0.62,0.62) scale(1.1322,1.0350)" d="M6.6,1.8 L4.8,0 H1.8 L0,1.8 V8.2 L1.8,10 H4.8 L6.6,8.2 V5.6 H3.8" vector-effect="non-scaling-stroke"/><path transform="translate(10.41,0.62) scale(1.1322,1.0350)" d="M0,10 V0 L6.6,10 V0" vector-effect="non-scaling-stroke"/><path transform="translate(20.20,0.62) scale(1.1322,1.0350)" d="M0,0 V10 H4.2 L6.6,7.6 V2.4 L4.2,0 Z" vector-effect="non-scaling-stroke"/></g>
<g transform="matrix(0,1,-1,0,907.80,338.60)" stroke-width="1.25"><path transform="translate(0.62,0.62) scale(1.1446,0.9750)" d="M0,10 V0 L6.6,10 V0" vector-effect="non-scaling-stroke"/><path transform="translate(10.52,0.62) scale(1.1446,0.9750)" d="M6.6,1.8 L4.8,0 H1.8 L0,1.8 V8.2 L1.8,10 H4.8 L6.6,8.2" vector-effect="non-scaling-stroke"/></g>
<g transform="matrix(0,-1,1,0,624.10,433.00)" stroke-width="1.25"><path transform="translate(0.62,0.62) scale(1.1238,1.0450)" d="M6.6,1.8 L4.8,0 H1.8 L0,1.8 V8.2 L1.8,10 H4.8 L6.6,8.2 V5.6 H3.8" vector-effect="non-scaling-stroke"/><path transform="translate(10.34,0.62) scale(1.1238,1.0450)" d="M0,10 V0 L6.6,10 V0" vector-effect="non-scaling-stroke"/><path transform="translate(20.06,0.62) scale(1.1238,1.0450)" d="M0,0 V10 H4.2 L6.6,7.6 V2.4 L4.2,0 Z" vector-effect="non-scaling-stroke"/></g>
<g transform="matrix(0,-1,1,0,649.40,433.00)" stroke-width="1.25"><path transform="translate(0.62,0.62) scale(1.1238,1.0050)" d="M0,0 V6 L3.3,10 L6.6,6 V0" vector-effect="non-scaling-stroke"/><path transform="translate(10.34,0.62) scale(1.1238,1.0050)" d="M6.6,1.8 L4.8,0 H1.8 L0,1.8 V8.2 L1.8,10 H4.8 L6.6,8.2" vector-effect="non-scaling-stroke"/><path transform="translate(20.06,0.62) scale(1.1238,1.0050)" d="M6.6,1.8 L4.8,0 H1.8 L0,1.8 V8.2 L1.8,10 H4.8 L6.6,8.2" vector-effect="non-scaling-stroke"/></g>
<g transform="matrix(0,-1,1,0,676.10,433.00)" stroke-width="1.25"><path transform="translate(0.62,0.62) scale(1.1238,0.9750)" d="M6.6,1.6 L5,0 H1.6 L0,1.6 V3.4 L1.6,5 H5 L6.6,6.6 V8.4 L5,10 H1.6 L0,8.4" vector-effect="non-scaling-stroke"/><path transform="translate(10.34,0.62) scale(1.1238,0.9750)" d="M6.6,1.8 L4.8,0 H1.8 L0,1.8 V8.2 L1.8,10 H4.8 L6.6,8.2" vector-effect="non-scaling-stroke"/><path transform="translate(20.06,0.62) scale(1.1238,0.9750)" d="M0,0 V10 H6.6" vector-effect="non-scaling-stroke"/></g>
<g transform="matrix(0,-1,1,0,701.30,433.00)" stroke-width="1.25"><path transform="translate(0.62,0.62) scale(1.1238,1.0150)" d="M6.6,1.6 L5,0 H1.6 L0,1.6 V3.4 L1.6,5 H5 L6.6,6.6 V8.4 L5,10 H1.6 L0,8.4" vector-effect="non-scaling-stroke"/><path transform="translate(10.34,0.62) scale(1.1238,1.0150)" d="M0,0 V10 H4.2 L6.6,7.6 V2.4 L4.2,0 Z" vector-effect="non-scaling-stroke"/><path transform="translate(20.06,0.62) scale(1.1238,1.0150)" d="M0,10 V3.3 L3.3,0 L6.6,3.3 V10 M0,6.2 H6.6" vector-effect="non-scaling-stroke"/></g>
</g>
<rect x="632.15" y="602.05" width="79.1" height="37" fill="none" stroke="#0000ff" stroke-width="1.9"/>
<text x="641.5" y="621.3" font-size="18.5" font-weight="bold" fill="#0000ff" stroke="#0000ff" stroke-width="0.5" font-family="Liberation Sans, sans-serif" textLength="61" lengthAdjust="spacingAndGlyphs">技小新</text>
<text x="641.5" y="633.8" font-size="12" font-weight="bold" fill="#0000ff" stroke="#0000ff" stroke-width="0.4" font-family="Liberation Sans, sans-serif" textLength="58.5" lengthAdjust="spacingAndGlyphs">jixin.pro</text>
<ellipse cx="530.4" cy="202.2" rx="22.3" ry="23" fill="none" stroke="#eef2ef" stroke-width="2"/>
<path d="M534.4,184.6 L524.3,190.3 L524.7,191.3 L527.7,190.6 V214.8 Q527.5,216.4 523.1,216.9 V218.2 H537.7 V216.9 Q534.2,216.4 534,214.8 V184.6 Z" fill="#eef2ef"/>
</svg>
<svg class="a" style="left:0;top:0" width="1504" height="961" viewBox="0 0 1504 961" font-family="Liberation Sans, sans-serif">
<g transform="translate(1436,10)" fill="#e6e6e6">
<rect x="-1.6" y="-6.5" width="3.2" height="4" transform="rotate(0)"/>
<rect x="-1.6" y="-6.5" width="3.2" height="4" transform="rotate(45)"/>
<rect x="-1.6" y="-6.5" width="3.2" height="4" transform="rotate(90)"/>
<rect x="-1.6" y="-6.5" width="3.2" height="4" transform="rotate(135)"/>
<rect x="-1.6" y="-6.5" width="3.2" height="4" transform="rotate(180)"/>
<rect x="-1.6" y="-6.5" width="3.2" height="4" transform="rotate(225)"/>
<rect x="-1.6" y="-6.5" width="3.2" height="4" transform="rotate(270)"/>
<rect x="-1.6" y="-6.5" width="3.2" height="4" transform="rotate(315)"/>
<circle r="4.6"/><circle r="1.9" fill="#414141"/></g>
<path d="M1454,14 h10 l-1.5,-2 v-3.5 a3.5,3.5 0 0 0 -7,0 v3.5 z M1457.5,15 h3 a1.5,1.5 0 0 1 -3,0z" fill="#e6e6e6"/>
<circle cx="1484" cy="10" r="6.5" fill="none" stroke="#e6e6e6" stroke-width="1.6"/><circle cx="1484" cy="8" r="2.6" fill="#e6e6e6"/><path d="M1479.6,14.5 a4.6,3.6 0 0 1 8.8,0z" fill="#e6e6e6"/>
<path d="M1497,9 h6 l-3,3z" fill="#e6e6e6"/>
<path d="M231,35.5 h7 l-3.5,5z" fill="#f0f0f0"/>
<path d="M247.5,33 h5 v6 h1.5 v1.5 h-3.2 v3.5 h-1.5 v-3.5 h-3.2 v-1.5 h1.4z" fill="#f0f0f0"/>
<path d="M263.5,35 l6,6 M269.5,35 l-6,6" stroke="#f0f0f0" stroke-width="1.8"/>
<path d="M280.5,51.5 V31 a3,3 0 0 1 3,-3 H393.8 a3,3 0 0 1 3,3 V51.5z" fill="#4b4b4b" stroke="#2e2e2e" stroke-width="1"/>
<g transform="translate(285,33)"><rect width="16" height="12" fill="#0f7060"/><rect x="1" y="1" width="5" height="1.4" fill="#d8f0e8"/><rect x="1" y="4" width="5" height="1.4" fill="#d8f0e8"/><rect x="1" y="7" width="5" height="1.4" fill="#d8f0e8"/><rect x="8" y="1.5" width="5" height="5" fill="#d8f0e8"/><rect x="8" y="9" width="7" height="2" fill="#d8f0e8"/></g>
<text x="305" y="43" font-size="11.5" fill="#eaeaea">STM001.pcbdoc *</text>
<g fill="#a898a8" stroke="none">
<rect x="15.6" y="65.3" width="12.8" height="13" fill="#8c8490"/><rect x="17.8" y="66.3" width="8.4" height="4.6" fill="#c8a8c8"/><rect x="18.8" y="72.8" width="6.2" height="5" fill="#ddd0dd"/><rect x="19.5" y="73.8" width="2" height="3" fill="#8c8490"/>
<path d="M44.5,67.5 h6 l1.5,1.5 v10 h-7.5z" fill="#c0a8c0" stroke="#8c8490" stroke-width="0.8"/><path d="M47,65 h5.5 l2,2 v8.5 h-7.5z" fill="#c8b8c8" stroke="#8c8490" stroke-width="0.8"/><path d="M46,72.5 h4.5 M46,74.5 h4.5" stroke="#5a5060" stroke-width="0.9"/>
<path d="M70,66 h5 l1.5,1.5 h6 v8 h-12.5z" fill="#9a909a"/><circle cx="80" cy="73" r="3" fill="#b8a8b8"/><path d="M78,75 l-3,3" stroke="#b8a8b8" stroke-width="1.5"/>
<path d="M97,66 h5 l1.5,1.5 h6 v8 h-12.5z" fill="#9a909a"/><circle cx="107" cy="75" r="3.2" fill="#8a808a" stroke="#b0a0b0" stroke-width="1"/>
<rect x="121" y="64" width="1" height="14" fill="#222"/>
<g transform="translate(137,71.5)" fill="#b0a8b8">
<rect x="-1.3" y="-6.6" width="2.6" height="3.5" transform="rotate(0)"/>
<rect x="-1.3" y="-6.6" width="2.6" height="3.5" transform="rotate(45)"/>
<rect x="-1.3" y="-6.6" width="2.6" height="3.5" transform="rotate(90)"/>
<rect x="-1.3" y="-6.6" width="2.6" height="3.5" transform="rotate(135)"/>
<rect x="-1.3" y="-6.6" width="2.6" height="3.5" transform="rotate(180)"/>
<rect x="-1.3" y="-6.6" width="2.6" height="3.5" transform="rotate(225)"/>
<rect x="-1.3" y="-6.6" width="2.6" height="3.5" transform="rotate(270)"/>
<rect x="-1.3" y="-6.6" width="2.6" height="3.5" transform="rotate(315)"/>
<circle r="5"/><circle r="4" fill="#c8c0dc"/><circle r="2.1" fill="#3b3b3b"/></g>
</g>
<rect x="8.5" y="87.5" width="260" height="845" fill="#3c3c3c" stroke="#2a2a2a" stroke-width="1"/>
<rect x="15.5" y="92.5" width="246.5" height="20" rx="3" fill="#2e2e2e" stroke="#272727" stroke-width="1"/>
<circle cx="27" cy="101" r="3.6" fill="none" stroke="#c8c8c8" stroke-width="1.4"/><path d="M29.5,103.5 l3,3" stroke="#c8c8c8" stroke-width="1.6"/>
<text x="40" y="106" font-size="11" fill="#d8d8d8">Search</text>
<rect x="15" y="118" width="247" height="1" fill="#262626"/>
<rect x="42" y="146.5" width="221" height="15" fill="#4a4a4a"/>
<rect x="66.3" y="178.2" width="196.7" height="15.6" fill="#5b7c9c"/>
<rect x="30.5" y="130.5" width="232" height="14.7" fill="none" stroke="#6a8bb0" stroke-width="1"/>
<g transform="translate(14,131)"><rect x="0" y="2" width="9" height="11" fill="#8aa0c8"/><rect x="2" y="4" width="9" height="11" fill="#c8d4e8"/><rect x="5" y="0" width="9" height="11" fill="#e8eef8" stroke="#6070a0" stroke-width="0.8"/><path d="M7,3 h5 M7,5 h5 M7,7 h5" stroke="#6070a0" stroke-width="0.8"/></g>
<text x="32.3" y="142" font-size="11" font-weight="bold" fill="#f0f0f0">Workspace1.DsnWrk</text>
<path d="M17,157 h5.5 v-5.5z" fill="#e8e8e8"/>
<path d="M27,150 h4.5 l1.5,1.5 h7 v9 h-13z" fill="#b8dcc8"/>
<text x="44.5" y="158" font-size="11" font-weight="bold" fill="#f0f0f0">Free Documents</text>
<path d="M29,173 h5.5 v-5.5z" fill="#e8e8e8"/>
<path d="M39,166 h4.5 l1.5,1.5 h7 v9 h-13z" fill="#b8dcc8"/>
<text x="55.9" y="174" font-size="11" fill="#ececec">Source Documents</text>
<g transform="translate(50,180)"><rect width="15" height="12" fill="#0f7060"/><rect x="1" y="1" width="4.5" height="1.4" fill="#d8f0e8"/><rect x="1" y="4" width="4.5" height="1.4" fill="#d8f0e8"/><rect x="1" y="7" width="4.5" height="1.4" fill="#d8f0e8"/><rect x="7.5" y="1.5" width="5" height="5" fill="#d8f0e8"/><rect x="7.5" y="9" width="7" height="2" fill="#d8f0e8"/></g>
<text x="68.6" y="190" font-size="11" fill="#f4f4f4">STM001.pcbdoc *</text>
<path d="M232.5,181 h5 l2.5,2.5 v8 h-7.5z" fill="none" stroke="#e8b070" stroke-width="1"/>
<path d="M1504,29.5 H1491 a3,3 0 0 0 -3,3 V99.5 a3,3 0 0 0 3,3 H1504" fill="#464646" stroke="#5a5a5a" stroke-width="1"/>
<text transform="translate(1492,34) rotate(90)" font-size="11.5" fill="#e4e4e4">Components</text>
<path d="M1504,106.5 H1491 a3,3 0 0 0 -3,3 V163.5 a3,3 0 0 0 3,3 H1504" fill="#464646" stroke="#5a5a5a" stroke-width="1"/>
<text transform="translate(1492,111) rotate(90)" font-size="11.5" fill="#e4e4e4">Properties</text>
<rect x="694.5" y="55.5" width="372.5" height="27" rx="3" fill="#3d3d3d"/>
<path d="M745.6,82 h5 v-5z" fill="#d4bcd4"/>
<path d="M773.4,82 h5 v-5z" fill="#d4bcd4"/>
<path d="M801.5,82 h5 v-5z" fill="#d4bcd4"/>
<path d="M831,82 h5 v-5z" fill="#d4bcd4"/>
<path d="M859,82 h5 v-5z" fill="#d4bcd4"/>
<path d="M887,82 h5 v-5z" fill="#d4bcd4"/>
<path d="M915,82 h5 v-5z" fill="#d4bcd4"/>
<path d="M943,82 h5 v-5z" fill="#d4bcd4"/>
<path d="M971,82 h5 v-5z" fill="#d4bcd4"/>
<path d="M999,82 h5 v-5z" fill="#d4bcd4"/>
<path d="M1055,82 h5 v-5z" fill="#d4bcd4"/>
<rect x="810" y="61" width="1.2" height="16" fill="#1e1e1e"/>
<path d="M705,62.7 h13 l-4.5,5.5 v5.9 h-4 v-5.9z" fill="#c8e8e0"/>
<path d="M733,68.5 h13 M739.5,62 v13" stroke="#6a9ad0" stroke-width="1.2"/><path d="M733,68.5 l2,-1.5 v3z M746,68.5 l-2,-1.5 v3z M739.5,62 l-1.5,2 h3z M739.5,75 l-1.5,-2 h3z" fill="#6a9ad0"/>
<rect x="761.5" y="62.5" width="13" height="13" fill="none" stroke="#6aa0d8" stroke-width="1.2" stroke-dasharray="2 1.5"/>
<rect x="790" y="66" width="3" height="7" fill="#e8b890"/><rect x="794.5" y="63" width="3" height="10" fill="#c8e8e0"/><rect x="799" y="66" width="3" height="7" fill="#e8b890"/><rect x="790" y="74" width="12" height="1.5" fill="#8ab8e8"/>
<rect x="818.5" y="63" width="12" height="12" fill="#c8e8e0" stroke="#8ab8d8" stroke-width="0.8"/><path d="M819,61.5 v1 M821.5,61.5 v1 M824,61.5 v1 M826.5,61.5 v1 M829,61.5 v1 M819,75.5 v1.5 M821.5,75.5 v1.5 M824,75.5 v1.5 M826.5,75.5 v1.5 M829,75.5 v1.5 M817,64 h1 M817,66.5 h1 M817,69 h1 M817,71.5 h1 M817,74 h1 M831,64 h1.5 M831,66.5 h1.5 M831,69 h1.5 M831,71.5 h1.5 M831,74 h1.5" stroke="#8ab8d8" stroke-width="1"/>
<path d="M847.5,74 l10,-10" stroke="#6a9ad0" stroke-width="1.6"/><circle cx="847" cy="74.5" r="2.2" fill="none" stroke="#f0a030" stroke-width="1.2"/><circle cx="857.5" cy="64" r="2.2" fill="none" stroke="#f0a030" stroke-width="1.2"/><path d="M846,69 v-5 h6" fill="none" stroke="#f0a030" stroke-width="1.2"/><path d="M852,62.3 l2.5,1.7 l-2.5,1.7z" fill="#f0a030"/>
<path d="M875,72 v-4 a3,3 0 0 1 6,0 v3 a2,2 0 0 0 4,0 v-3 a3,3 0 0 1 3,-3" fill="none" stroke="#6a9ad0" stroke-width="1.6" transform="translate(-1,0)"/><circle cx="875" cy="72.5" r="1.8" fill="none" stroke="#f0a030" stroke-width="1.1"/><circle cx="887" cy="72.5" r="1.8" fill="none" stroke="#f0a030" stroke-width="1.1"/>
<circle cx="907" cy="68" r="5.3" fill="#f8b000" stroke="#d89020" stroke-width="1"/><circle cx="907" cy="68" r="1.7" fill="#3d3d3d"/><rect x="905.5" y="72" width="3" height="5" fill="#f0a030"/><path d="M912,67 h5" stroke="#8ad8d0" stroke-width="1.2"/>
<path d="M929.5,67.5 h6 v-4 h9 v11.5 h-15z" fill="#c8e8e0" stroke="#6a9ad0" stroke-width="0.8"/>
<rect x="957.5" y="61" width="15.5" height="15.5" fill="none" stroke="#e8e0e8" stroke-width="1.1"/><path d="M961.5,72 l8,-8" stroke="#6a9ad0" stroke-width="1.3"/><circle cx="961.5" cy="72.5" r="1.6" fill="none" stroke="#f0a030" stroke-width="1"/><circle cx="969.5" cy="64.5" r="1.6" fill="none" stroke="#f0a030" stroke-width="1"/>
<path d="M986.5,64 v11 h12.5 v-11" fill="none" stroke="#6a9ad0" stroke-width="1.3"/><circle cx="987" cy="63" r="1.8" fill="none" stroke="#f0a030" stroke-width="1"/><circle cx="999" cy="63" r="1.8" fill="none" stroke="#f0a030" stroke-width="1"/><text x="988.5" y="73.5" font-size="8.5" fill="#d0d0d0">10</text>
<text x="1021" y="76" font-size="18" text-anchor="middle" fill="#6aa0d8" font-family="Liberation Serif, serif" font-weight="bold">A</text>
<path d="M1042.5,75.5 l13,-12.5" stroke="#6aa0d8" stroke-width="1.8"/>
<path d="M1.5,939 V957.5 a3,3 0 0 0 3,3 H50 a3,3 0 0 0 3,-3 V939" fill="#3b3b3b" stroke="#2a2a2a" stroke-width="1"/>
<text x="7.3" y="955" font-size="11" fill="#e8e8e8">Projects</text>
<path d="M53,939 V957.5 a3,3 0 0 0 3,3 H113 a3,3 0 0 0 3,-3 V939" fill="#383838" stroke="#2a2a2a" stroke-width="1"/>
<text x="60.2" y="955" font-size="11" fill="#e8e8e8">Navigator</text>
<path d="M116,939 V957.5 a3,3 0 0 0 3,3 H147 a3,3 0 0 0 3,-3 V939" fill="#383838" stroke="#2a2a2a" stroke-width="1"/>
<text x="123" y="955" font-size="11" fill="#e8e8e8">PCB</text>
<path d="M150,939 V957.5 a3,3 0 0 0 3,3 H208 a3,3 0 0 0 3,-3 V939" fill="#383838" stroke="#2a2a2a" stroke-width="1"/>
<text x="156.3" y="955" font-size="11" fill="#e8e8e8">PCB Filter</text>
<rect x="283.7" y="942.7" width="24.6" height="12.6" fill="#ff0000"/>
<path d="M308.3,942.7 H325 a3,3 0 0 1 3,3 V952.3 a3,3 0 0 1 -3,3 H308.3z" fill="#4a4a4a"/>
<text x="312.5" y="953.3" font-size="11" fill="#e8e8e8">LS</text>
<rect x="333.3" y="941.5" width="33.5" height="15.5" rx="3" fill="#474747"/>
<rect x="350.5" y="943" width="1" height="12" fill="#2a2a2a"/>
<path d="M343.5,945.5 l-3.5,3.8 l3.5,3.8z" fill="#8a8a8a"/><path d="M357,945.5 l3.5,3.8 l-3.5,3.8z" fill="#f0f0f0"/>
<clipPath id="lbc"><rect x="280" y="935" width="1201" height="26"/></clipPath><g clip-path="url(#lbc)">
<path d="M372.4,939 V953.8 a3,3 0 0 0 3,3 H465.0 a3,3 0 0 0 3,-3 V939" fill="#474747" stroke="#333" stroke-width="1"/>
<rect x="378.7" y="943.7" width="9.5" height="9" fill="#ff0000" stroke="#8c8c8c" stroke-width="1"/>
<text x="396.2" y="953" font-size="11" font-weight="bold" fill="#ececec">[1] Top Layer</text>
<path d="M469.0,939 V953.8 a3,3 0 0 0 3,3 H578.5 a3,3 0 0 0 3,-3 V939" fill="#474747" stroke="#333" stroke-width="1"/>
<rect x="475.3" y="943.7" width="9.5" height="9" fill="#0000ff" stroke="#8c8c8c" stroke-width="1"/>
<text x="492.8" y="953" font-size="11.5" font-weight="normal" fill="#ececec">[2] Bottom Layer</text>
<path d="M582.5,939 V953.8 a3,3 0 0 0 3,3 H675.3 a3,3 0 0 0 3,-3 V939" fill="#474747" stroke="#333" stroke-width="1"/>
<rect x="588.8" y="943.7" width="9.5" height="9" fill="#ff00ff" stroke="#8c8c8c" stroke-width="1"/>
<text x="606.3" y="953" font-size="11.5" font-weight="normal" fill="#ececec">Mechanical 1</text>
<path d="M679.3,939 V953.8 a3,3 0 0 0 3,3 H765.2 a3,3 0 0 0 3,-3 V939" fill="#474747" stroke="#333" stroke-width="1"/>
<rect x="685.5999999999999" y="943.7" width="9.5" height="9" fill="#ffff00" stroke="#8c8c8c" stroke-width="1"/>
<text x="703.0999999999999" y="953" font-size="11.5" font-weight="normal" fill="#ececec">Top Overlay</text>
<path d="M769.2,939 V953.8 a3,3 0 0 0 3,3 H874.1 a3,3 0 0 0 3,-3 V939" fill="#474747" stroke="#333" stroke-width="1"/>
<rect x="775.5" y="943.7" width="9.5" height="9" fill="#a07038" stroke="#8c8c8c" stroke-width="1"/>
<text x="793.0" y="953" font-size="11.5" font-weight="normal" fill="#ececec">Bottom Overlay</text>
<path d="M878.1,939 V953.8 a3,3 0 0 0 3,3 H953.0 a3,3 0 0 0 3,-3 V939" fill="#474747" stroke="#333" stroke-width="1"/>
<rect x="884.4" y="943.7" width="9.5" height="9" fill="#808080" stroke="#8c8c8c" stroke-width="1"/>
<text x="901.9" y="953" font-size="11.5" font-weight="normal" fill="#ececec">Top Paste</text>
<path d="M957.0,939 V953.8 a3,3 0 0 0 3,3 H1048.7 a3,3 0 0 0 3,-3 V939" fill="#474747" stroke="#333" stroke-width="1"/>
<rect x="963.3" y="943.7" width="9.5" height="9" fill="#800000" stroke="#8c8c8c" stroke-width="1"/>
<text x="980.8" y="953" font-size="11.5" font-weight="normal" fill="#ececec">Bottom Paste</text>
<path d="M1052.7,939 V953.8 a3,3 0 0 0 3,3 H1135.2 a3,3 0 0 0 3,-3 V939" fill="#474747" stroke="#333" stroke-width="1"/>
<rect x="1059.0" y="943.7" width="9.5" height="9" fill="#800080" stroke="#8c8c8c" stroke-width="1"/>
<text x="1076.5" y="953" font-size="11.5" font-weight="normal" fill="#ececec">Top Solder</text>
<path d="M1139.2,939 V953.8 a3,3 0 0 0 3,3 H1239.4 a3,3 0 0 0 3,-3 V939" fill="#474747" stroke="#333" stroke-width="1"/>
<rect x="1145.5" y="943.7" width="9.5" height="9" fill="#ff00ff" stroke="#8c8c8c" stroke-width="1"/>
<text x="1163.0" y="953" font-size="11.5" font-weight="normal" fill="#ececec">Bottom Solder</text>
<path d="M1243.4,939 V953.8 a3,3 0 0 0 3,3 H1324.8 a3,3 0 0 0 3,-3 V939" fill="#474747" stroke="#333" stroke-width="1"/>
<rect x="1249.7" y="943.7" width="9.5" height="9" fill="#800000" stroke="#8c8c8c" stroke-width="1"/>
<text x="1267.2" y="953" font-size="11.5" font-weight="normal" fill="#ececec">Drill Guide</text>
<path d="M1328.8,939 V953.8 a3,3 0 0 0 3,3 H1432.5 a3,3 0 0 0 3,-3 V939" fill="#474747" stroke="#333" stroke-width="1"/>
<rect x="1335.1" y="943.7" width="9.5" height="9" fill="#ff00ff" stroke="#8c8c8c" stroke-width="1"/>
<text x="1352.6" y="953" font-size="11.5" font-weight="normal" fill="#ececec">Keep-Out Layer</text>
<path d="M1436.5,939 V953.8 a3,3 0 0 0 3,3 H1496.5 a3,3 0 0 0 3,-3 V939" fill="#474747" stroke="#333" stroke-width="1"/>
<rect x="1442.8" y="943.7" width="9.5" height="9" fill="#ff0000" stroke="#8c8c8c" stroke-width="1"/>
<text x="1460.3" y="953" font-size="11.5" font-weight="normal" fill="#ececec">Drill Drawing</text>
</g>
</svg>
</body></html>
